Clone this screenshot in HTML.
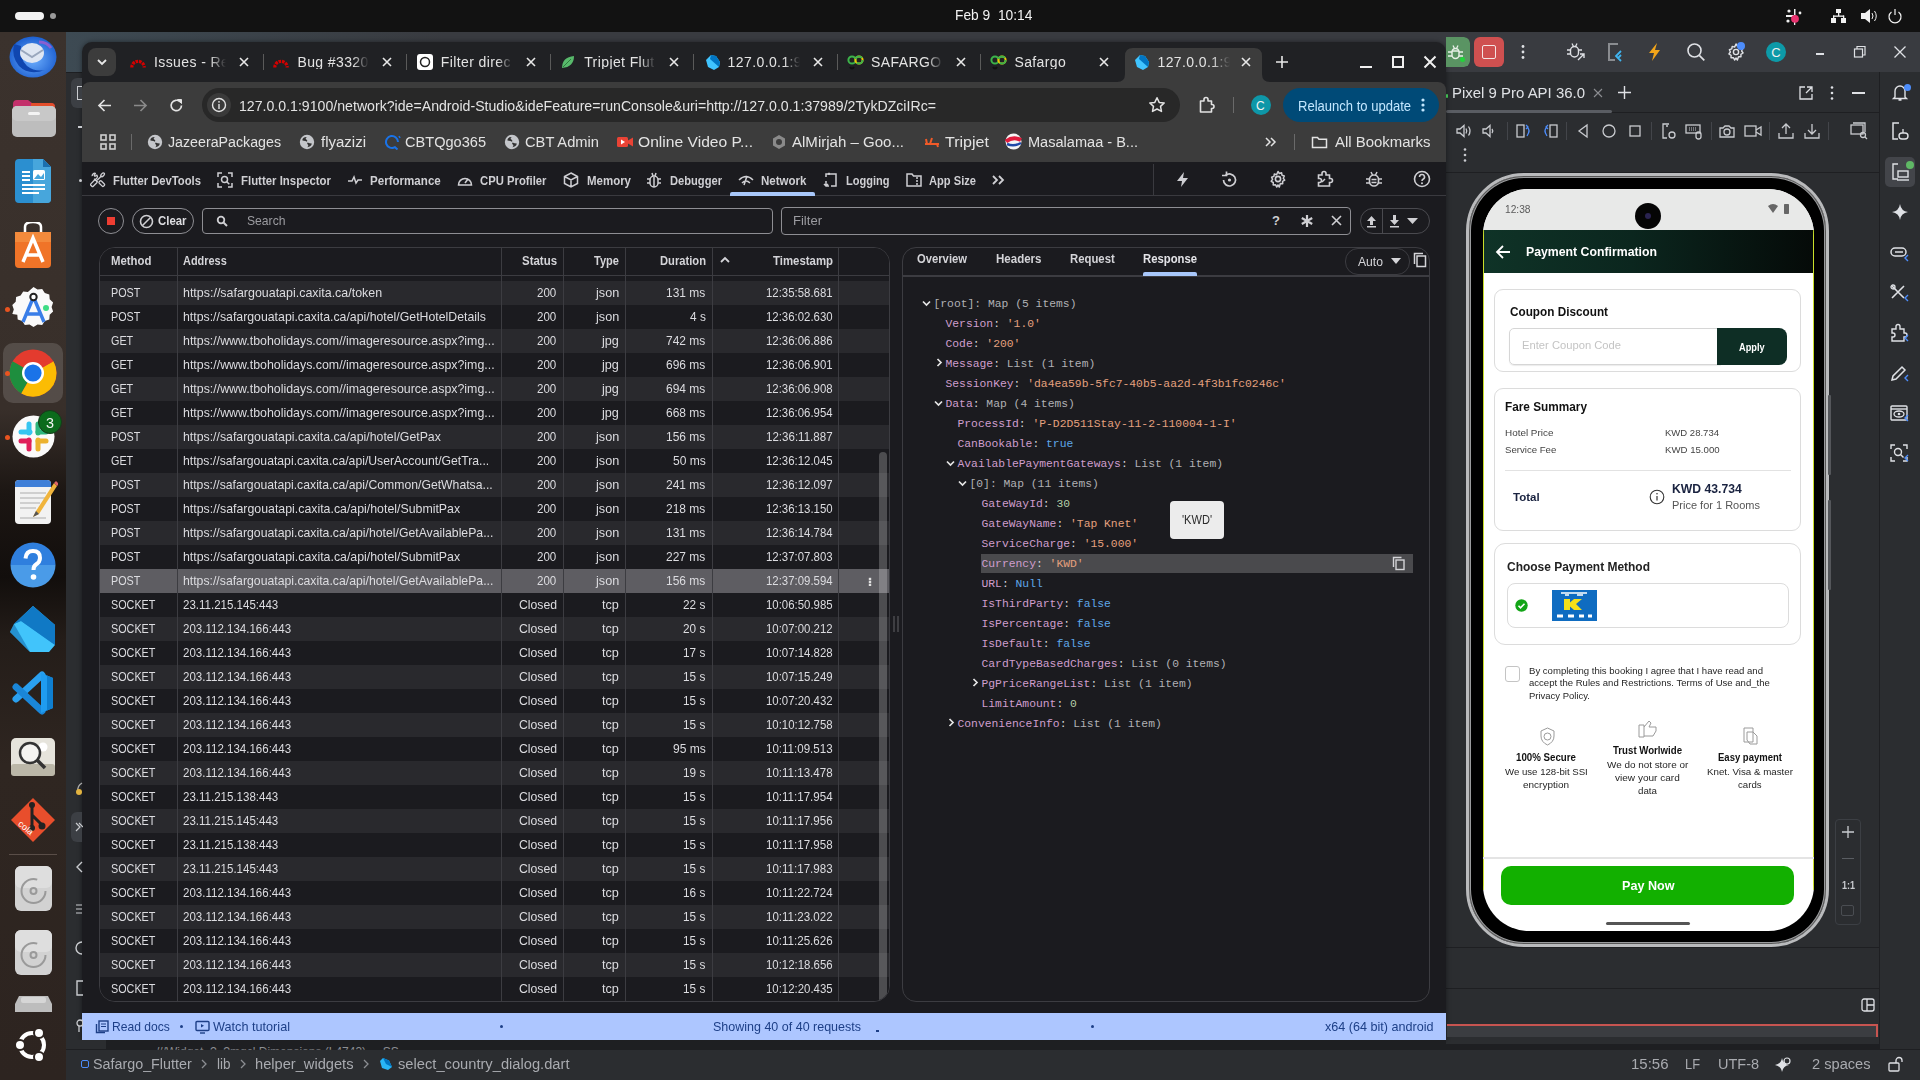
<!DOCTYPE html><html><head><meta charset="utf-8"><style>
*{margin:0;padding:0;box-sizing:border-box}
html,body{width:1920px;height:1080px;overflow:hidden;background:#2b2d30;font-family:"Liberation Sans",sans-serif}
div,svg{position:absolute}
.t{position:absolute;white-space:nowrap}
</style></head><body><div style="left:0px;top:0px;width:1920px;height:32px;background:#121212"></div><div style="left:15px;top:12px;width:29px;height:8px;background:#f2f2f2;border-radius:4px"></div><div style="left:50px;top:13px;width:6px;height:6px;background:#9a9a9a;border-radius:3px"></div><div class="t" style="left:954.6px;top:7.30px;font-size:15px;line-height:15px;color:#f2f2f2;font-weight:normal;font-family:'Liberation Sans',sans-serif;transform:scaleX(0.9189);transform-origin:0 0;white-space:pre">Feb 9  10:14</div><svg style="position:absolute;left:1785px;top:8px;" width="20" height="18" viewBox="0 0 20 18"><g fill="#eee"><rect x="1" y="7" width="8" height="2"/><circle cx="4" cy="3" r="1.6"/><rect x="9" y="1" width="1.5" height="6"/><circle cx="15" cy="5" r="1.4"/><circle cx="3" cy="13" r="1.6"/><rect x="9" y="11" width="1.3" height="6"/></g><circle cx="10" cy="10.8" r="3.9" fill="#e8336f"/></svg><svg style="position:absolute;left:1830px;top:8px;" width="18" height="16" viewBox="0 0 18 16"><g fill="#f2f2f2"><rect x="6" y="1" width="5" height="4"/><rect x="1" y="10" width="5" height="5"/><rect x="11" y="10" width="5" height="5"/><rect x="8" y="5" width="1.3" height="3"/><rect x="3" y="7.5" width="11" height="1.3"/><rect x="3" y="7.5" width="1.3" height="3"/><rect x="13" y="7.5" width="1.3" height="3"/></g></svg><svg style="position:absolute;left:1860px;top:7px;" width="18" height="18" viewBox="0 0 18 18"><path d="M1 6h4l5-4v14l-5-4H1z" fill="#f0f0f0"/><path d="M12 6q2 3 0 6M14.5 4q3.5 5 0 10" stroke="#f0f0f0" stroke-width="1" fill="none"/></svg><svg style="position:absolute;left:1886px;top:7px;" width="18" height="18" viewBox="0 0 18 18"><path d="M5.5 5A6 6 0 1 0 12.5 5" stroke="#f0f0f0" stroke-width="1.2" fill="none"/><rect x="8.4" y="2" width="1.2" height="6" fill="#f0f0f0"/></svg><div style="left:0px;top:32px;width:66px;height:1048px;background:linear-gradient(180deg,#3b322d 0%,#382f2a 36%,#1c1613 44%,#120e0c 52%,#241d19 58%,#2f2621 70%,#2d2420 100%)"></div><div style="left:66px;top:32px;width:1854px;height:1048px;background:#2b2d30"></div><div style="left:66px;top:32px;width:1854px;height:40px;background:#393b40"></div><div style="left:66px;top:32px;width:380px;height:40px;background:linear-gradient(90deg,#3d4a53,#393b40)"></div><div style="left:66px;top:72px;width:1380px;height:1px;background:#1e1f22"></div><div style="left:1446px;top:112px;width:434px;height:1px;background:#1e1f22"></div><div style="left:1446px;top:110px;width:166px;height:3px;background:#5a5d63;border-radius:2px"></div><div style="left:1879px;top:72px;width:1px;height:976px;background:#1e1f22"></div><div style="left:1446px;top:172px;width:434px;height:1px;background:#1e1f22"></div><div style="left:1446px;top:947px;width:434px;height:1px;background:#1e1f22"></div><div style="left:1446px;top:988px;width:434px;height:1px;background:#1e1f22"></div><div style="left:66px;top:1049px;width:1854px;height:1px;background:#1e1f22"></div><div style="left:82px;top:42px;width:1364px;height:998px;background:#202124;border-radius:10px 10px 0 0;overflow:hidden;box-shadow:0 0 5px rgba(0,0,0,.45)"></div><div style="left:82px;top:82px;width:1364px;height:80px;background:#3c3c3c;border-radius:8px 8px 0 0"></div><div style="left:82px;top:162px;width:1364px;height:851px;background:#1b1b1f"></div><div style="left:82px;top:1013px;width:1364px;height:27px;background:#adc6ff"></div><div style="left:88px;top:48px;width:28px;height:28px;background:#3c3c3c;border-radius:8px"></div><svg style="position:absolute;left:95px;top:55px;" width="14" height="14" viewBox="0 0 14 14"><path d="M3 5l4 4 4-4" stroke="#e8e8e8" stroke-width="1.8" fill="none"/></svg><svg style="position:absolute;left:130px;top:54px;" width="16" height="16" viewBox="0 0 16 16"><path d="M1.8 13.5A6.2 6.2 0 0 1 14.2 13.5" stroke="#d40000" stroke-width="3.2" fill="none" stroke-dasharray="2.6 0.9"/></svg><div class="t" style="left:154.0px;top:55.15px;font-size:14px;line-height:14px;color:#e3e3e3;font-weight:normal;font-family:'Liberation Sans',sans-serif;width:72px;overflow:hidden;letter-spacing:0.4px;-webkit-mask-image:linear-gradient(90deg,#000 78%,transparent 100%)">Issues - Red</div><svg style="position:absolute;left:238px;top:56px;" width="12" height="12" viewBox="0 0 12 12"><path d="M2 2l8 8M10 2l-8 8" stroke="#e8e8e8" stroke-width="1.6"/></svg><div style="left:263px;top:54px;width:1px;height:16px;background:#5a5a5a"></div><svg style="position:absolute;left:273px;top:54px;" width="16" height="16" viewBox="0 0 16 16"><path d="M1.8 13.5A6.2 6.2 0 0 1 14.2 13.5" stroke="#d40000" stroke-width="3.2" fill="none" stroke-dasharray="2.6 0.9"/></svg><div class="t" style="left:297.4px;top:55.15px;font-size:14px;line-height:14px;color:#e3e3e3;font-weight:normal;font-family:'Liberation Sans',sans-serif;width:72px;overflow:hidden;letter-spacing:0.4px;-webkit-mask-image:linear-gradient(90deg,#000 78%,transparent 100%)">Bug #3320</div><svg style="position:absolute;left:381px;top:56px;" width="12" height="12" viewBox="0 0 12 12"><path d="M2 2l8 8M10 2l-8 8" stroke="#e8e8e8" stroke-width="1.6"/></svg><div style="left:406px;top:54px;width:1px;height:16px;background:#5a5a5a"></div><svg style="position:absolute;left:417px;top:54px;" width="16" height="16" viewBox="0 0 16 16"><rect x="0" y="0" width="16" height="16" rx="3" fill="#fff"/><circle cx="8" cy="8" r="4.5" stroke="#222" stroke-width="1.5" fill="none"/></svg><div class="t" style="left:440.8px;top:55.15px;font-size:14px;line-height:14px;color:#e3e3e3;font-weight:normal;font-family:'Liberation Sans',sans-serif;width:72px;overflow:hidden;letter-spacing:0.4px;-webkit-mask-image:linear-gradient(90deg,#000 78%,transparent 100%)">Filter direc</div><svg style="position:absolute;left:525px;top:56px;" width="12" height="12" viewBox="0 0 12 12"><path d="M2 2l8 8M10 2l-8 8" stroke="#e8e8e8" stroke-width="1.6"/></svg><div style="left:550px;top:54px;width:1px;height:16px;background:#5a5a5a"></div><svg style="position:absolute;left:560px;top:54px;" width="16" height="16" viewBox="0 0 16 16"><path d="M2 14Q2 3 14 2Q14 13 2 14z" fill="#58b96b"/><path d="M3 13L11 5" stroke="#2e7a3c" stroke-width="1"/></svg><div class="t" style="left:584.2px;top:55.15px;font-size:14px;line-height:14px;color:#e3e3e3;font-weight:normal;font-family:'Liberation Sans',sans-serif;width:72px;overflow:hidden;letter-spacing:0.4px;-webkit-mask-image:linear-gradient(90deg,#000 78%,transparent 100%)">Tripjet Flut</div><svg style="position:absolute;left:668px;top:56px;" width="12" height="12" viewBox="0 0 12 12"><path d="M2 2l8 8M10 2l-8 8" stroke="#e8e8e8" stroke-width="1.6"/></svg><div style="left:693px;top:54px;width:1px;height:16px;background:#5a5a5a"></div><svg style="position:absolute;left:704px;top:54px;" width="16" height="16" viewBox="0 0 16 16"><path d="M2 6L7 1L12 2L16 8L15 13L10 16L4 13z" fill="#40c4ff"/><path d="M7 1L12 2L16 8L15 13L6 5z" fill="#0175c2"/></svg><div class="t" style="left:727.6px;top:55.15px;font-size:14px;line-height:14px;color:#e3e3e3;font-weight:normal;font-family:'Liberation Sans',sans-serif;width:72px;overflow:hidden;letter-spacing:0.4px;-webkit-mask-image:linear-gradient(90deg,#000 78%,transparent 100%)">127.0.0.1:9</div><svg style="position:absolute;left:812px;top:56px;" width="12" height="12" viewBox="0 0 12 12"><path d="M2 2l8 8M10 2l-8 8" stroke="#e8e8e8" stroke-width="1.6"/></svg><div style="left:837px;top:54px;width:1px;height:16px;background:#5a5a5a"></div><svg style="position:absolute;left:847px;top:54px;" width="18" height="18" viewBox="0 0 18 18"><circle cx="5" cy="6" r="3.6" stroke="#3cb44a" stroke-width="2" fill="none"/><circle cx="12" cy="6" r="3.6" stroke="#f2c500" stroke-width="2" fill="none"/><circle cx="12" cy="6" r="3.6" stroke="#3cb44a" stroke-width="2" fill="none" stroke-dasharray="8 4"/><path d="M3 13q2 3 4 0" stroke="#111" stroke-width="2" fill="none"/></svg><div class="t" style="left:871.0px;top:55.15px;font-size:14px;line-height:14px;color:#e3e3e3;font-weight:normal;font-family:'Liberation Sans',sans-serif;width:72px;overflow:hidden;letter-spacing:0.4px;-webkit-mask-image:linear-gradient(90deg,#000 78%,transparent 100%)">SAFARGO</div><svg style="position:absolute;left:955px;top:56px;" width="12" height="12" viewBox="0 0 12 12"><path d="M2 2l8 8M10 2l-8 8" stroke="#e8e8e8" stroke-width="1.6"/></svg><div style="left:980px;top:54px;width:1px;height:16px;background:#5a5a5a"></div><svg style="position:absolute;left:990px;top:54px;" width="18" height="18" viewBox="0 0 18 18"><circle cx="5" cy="6" r="3.6" stroke="#3cb44a" stroke-width="2" fill="none"/><circle cx="12" cy="6" r="3.6" stroke="#f2c500" stroke-width="2" fill="none"/><circle cx="12" cy="6" r="3.6" stroke="#3cb44a" stroke-width="2" fill="none" stroke-dasharray="8 4"/><path d="M3 13q2 3 4 0" stroke="#111" stroke-width="2" fill="none"/></svg><div class="t" style="left:1014.4000000000001px;top:55.15px;font-size:14px;line-height:14px;color:#e3e3e3;font-weight:normal;font-family:'Liberation Sans',sans-serif;width:72px;overflow:hidden;letter-spacing:0.4px;-webkit-mask-image:linear-gradient(90deg,#000 78%,transparent 100%)">Safargo</div><svg style="position:absolute;left:1098px;top:56px;" width="12" height="12" viewBox="0 0 12 12"><path d="M2 2l8 8M10 2l-8 8" stroke="#e8e8e8" stroke-width="1.6"/></svg><svg style="position:absolute;left:1117px;top:48px" width="153" height="34" viewBox="0 0 153 34"><path d="M0 34Q8 34 8 26L8 8Q8 0 16 0L137 0Q145 0 145 8L145 26Q145 34 153 34z" fill="#3c3c3c"/></svg><svg style="position:absolute;left:1133px;top:54px;" width="16" height="16" viewBox="0 0 16 16"><path d="M2 6L7 1L12 2L16 8L15 13L10 16L4 13z" fill="#40c4ff"/><path d="M7 1L12 2L16 8L15 13L6 5z" fill="#0175c2"/></svg><div class="t" style="left:1157.5px;top:55.15px;font-size:14px;line-height:14px;color:#e3e3e3;font-weight:normal;font-family:'Liberation Sans',sans-serif;width:72px;overflow:hidden;letter-spacing:0.4px;-webkit-mask-image:linear-gradient(90deg,#000 75%,transparent 100%)">127.0.0.1:9100</div><svg style="position:absolute;left:1240px;top:56px;" width="12" height="12" viewBox="0 0 12 12"><path d="M2 2l8 8M10 2l-8 8" stroke="#e8e8e8" stroke-width="1.6"/></svg><svg style="position:absolute;left:1275px;top:55px;" width="14" height="14" viewBox="0 0 14 14"><path d="M7 1v12M1 7h12" stroke="#e8e8e8" stroke-width="1.6"/></svg><div style="left:1360px;top:66px;width:12px;height:2px;background:#f0f0f0"></div><div style="left:1392px;top:56px;width:12px;height:12px;border:2px solid #f0f0f0"></div><svg style="position:absolute;left:1423px;top:55px;" width="14" height="14" viewBox="0 0 14 14"><path d="M1.5 1.5l11 11M12.5 1.5l-11 11" stroke="#f0f0f0" stroke-width="2"/></svg><svg style="position:absolute;left:96px;top:97px;" width="17" height="17" viewBox="0 0 17 17"><path d="M15 8.5H3M8.5 3L3 8.5 8.5 14" stroke="#e3e3e3" stroke-width="1.7" fill="none"/></svg><svg style="position:absolute;left:132px;top:97px;" width="17" height="17" viewBox="0 0 17 17"><path d="M2 8.5h12M8.5 3L14 8.5 8.5 14" stroke="#8a8a8a" stroke-width="1.7" fill="none"/></svg><svg style="position:absolute;left:168px;top:97px;" width="17" height="17" viewBox="0 0 17 17"><path d="M13.5 8.5A5.2 5.2 0 1 1 12 4.8" stroke="#e3e3e3" stroke-width="1.7" fill="none"/><path d="M9.5 2.5h4v4z" fill="#e3e3e3" stroke="#e3e3e3" stroke-width="1"/></svg><div style="left:202px;top:88px;width:978px;height:34px;background:#282828;border-radius:17px"></div><div style="left:207px;top:93px;width:24px;height:24px;background:#3a3a3a;border-radius:12px"></div><svg style="position:absolute;left:211px;top:97px;" width="16" height="16" viewBox="0 0 16 16"><circle cx="8" cy="8" r="6.5" stroke="#e3e3e3" stroke-width="1.4" fill="none"/><rect x="7.3" y="7" width="1.4" height="5" fill="#e3e3e3"/><circle cx="8" cy="4.8" r="0.9" fill="#e3e3e3"/></svg><div class="t" style="left:239px;top:97.80px;font-size:15px;line-height:15px;color:#e3e3e3;font-weight:normal;font-family:'Liberation Sans',sans-serif;transform:scaleX(0.9423);transform-origin:0 0;">127.0.0.1:9100/network?ide=Android-Studio&amp;ideFeature=runConsole&amp;uri=http://127.0.0.1:37989/2TykDZciIRc=</div><svg style="position:absolute;left:1148px;top:96px;" width="18" height="18" viewBox="0 0 18 18"><path d="M9 1.8l2.2 4.6 5 .6-3.7 3.4 1 5L9 13l-4.5 2.4 1-5L1.8 7l5-.6z" stroke="#e3e3e3" stroke-width="1.5" fill="none" stroke-linejoin="round"/></svg><svg style="position:absolute;left:1198px;top:96px;" width="18" height="18" viewBox="0 0 18 18"><path d="M2.5 5H6V3.5a2 2 0 0 1 4 0V5h3.5v3.5h.5a2 2 0 0 1 0 4h-.5V16h-11z" stroke="#e3e3e3" stroke-width="1.6" fill="none" stroke-linejoin="round"/></svg><div style="left:1233px;top:97px;width:1px;height:16px;background:#6a6a6a"></div><div style="left:1251px;top:95px;width:20px;height:20px;background:#0e97a8;border-radius:10px"></div><div class="t" style="left:1256px;top:99.84px;font-size:12px;line-height:12px;color:#f2f2f2;font-weight:normal;font-family:'Liberation Sans',sans-serif;">C</div><div style="left:1283px;top:88px;width:156px;height:34px;background:#004a77;border-radius:17px"></div><div class="t" style="left:1298px;top:98.65px;font-size:14px;line-height:14px;color:#c2e7ff;font-weight:normal;font-family:'Liberation Sans',sans-serif;transform:scaleX(0.9306);transform-origin:0 0;">Relaunch to update</div><svg style="position:absolute;left:1419px;top:97px;" width="8" height="16" viewBox="0 0 8 16"><circle cx="4" cy="3" r="1.6" fill="#c2e7ff"/><circle cx="4" cy="8" r="1.6" fill="#c2e7ff"/><circle cx="4" cy="13" r="1.6" fill="#c2e7ff"/></svg><svg style="position:absolute;left:100px;top:134px;" width="16" height="16" viewBox="0 0 16 16"><g stroke="#d0d0d0" stroke-width="1.6" fill="none"><rect x="1" y="1" width="5" height="5"/><rect x="10" y="1" width="5" height="5"/><rect x="1" y="10" width="5" height="5"/><rect x="10" y="10" width="5" height="5"/></g></svg><div style="left:131px;top:134px;width:1px;height:16px;background:#6a6a6a"></div><svg style="position:absolute;left:147px;top:134px;" width="16" height="16" viewBox="0 0 16 16"><circle cx="8" cy="8" r="7.2" fill="#c4c6ca"/><path d="M3.2 6.2Q4 2.8 7.8 3Q6 4.3 7 5.2Q9 6 8 7.8Q6.4 7 4.6 6.8z M12.8 9.6Q12.4 13 8.2 13.2Q10 12 9 10.8Q7.4 9.8 8.6 8.6Q10.6 9.6 12.8 9.6z" fill="#333"/></svg><div class="t" style="left:168px;top:135.15px;font-size:14px;line-height:14px;color:#e3e3e3;font-weight:normal;font-family:'Liberation Sans',sans-serif;transform:scaleX(1.0153);transform-origin:0 0;">JazeeraPackages</div><svg style="position:absolute;left:299px;top:134px;" width="16" height="16" viewBox="0 0 16 16"><circle cx="8" cy="8" r="7.2" fill="#c4c6ca"/><path d="M3.2 6.2Q4 2.8 7.8 3Q6 4.3 7 5.2Q9 6 8 7.8Q6.4 7 4.6 6.8z M12.8 9.6Q12.4 13 8.2 13.2Q10 12 9 10.8Q7.4 9.8 8.6 8.6Q10.6 9.6 12.8 9.6z" fill="#333"/></svg><div class="t" style="left:321px;top:135.15px;font-size:14px;line-height:14px;color:#e3e3e3;font-weight:normal;font-family:'Liberation Sans',sans-serif;transform:scaleX(1.0712);transform-origin:0 0;">flyazizi</div><svg style="position:absolute;left:384px;top:134px;" width="18" height="16" viewBox="0 0 18 16"><path d="M14 8A6 6 0 1 0 11 13.2L13.5 15.5" stroke="#1a73e8" stroke-width="2" fill="none"/><path d="M15 2l1 2" stroke="#1a73e8" stroke-width="1.5"/></svg><div class="t" style="left:405px;top:135.15px;font-size:14px;line-height:14px;color:#e3e3e3;font-weight:normal;font-family:'Liberation Sans',sans-serif;transform:scaleX(1.0408);transform-origin:0 0;">CBTQgo365</div><svg style="position:absolute;left:504px;top:134px;" width="16" height="16" viewBox="0 0 16 16"><circle cx="8" cy="8" r="7.2" fill="#c4c6ca"/><path d="M3.2 6.2Q4 2.8 7.8 3Q6 4.3 7 5.2Q9 6 8 7.8Q6.4 7 4.6 6.8z M12.8 9.6Q12.4 13 8.2 13.2Q10 12 9 10.8Q7.4 9.8 8.6 8.6Q10.6 9.6 12.8 9.6z" fill="#333"/></svg><div class="t" style="left:525px;top:135.15px;font-size:14px;line-height:14px;color:#e3e3e3;font-weight:normal;font-family:'Liberation Sans',sans-serif;transform:scaleX(1.0489);transform-origin:0 0;">CBT Admin</div><svg style="position:absolute;left:616px;top:134px;" width="18" height="16" viewBox="0 0 18 16"><rect x="1" y="3" width="11" height="10" rx="1.5" fill="#ea4335"/><path d="M12 6.5L17 3.5V12.5L12 9.5z" fill="#ea4335"/><path d="M5 5.5v5l4-2.5z" fill="#fff"/></svg><div class="t" style="left:638px;top:135.15px;font-size:14px;line-height:14px;color:#e3e3e3;font-weight:normal;font-family:'Liberation Sans',sans-serif;transform:scaleX(1.1164);transform-origin:0 0;">Online Video P...</div><svg style="position:absolute;left:771px;top:134px;" width="16" height="16" viewBox="0 0 16 16"><path d="M8 1l6 3.5v7L8 15l-6-3.5v-7z" fill="#8a8a8a"/><circle cx="8" cy="8" r="3" fill="#3c3c3c"/></svg><div class="t" style="left:792px;top:135.15px;font-size:14px;line-height:14px;color:#e3e3e3;font-weight:normal;font-family:'Liberation Sans',sans-serif;transform:scaleX(1.0742);transform-origin:0 0;">AlMirjah – Goo...</div><svg style="position:absolute;left:924px;top:134px;" width="16" height="16" viewBox="0 0 16 16"><path d="M1 10h14M3 10l-1-5M13 10l1 3M6 10L8 4" stroke="#f05a28" stroke-width="2" fill="none"/></svg><div class="t" style="left:945px;top:135.15px;font-size:14px;line-height:14px;color:#e3e3e3;font-weight:normal;font-family:'Liberation Sans',sans-serif;transform:scaleX(1.1465);transform-origin:0 0;">Tripjet</div><svg style="position:absolute;left:1005px;top:133px;" width="17" height="17" viewBox="0 0 17 17"><circle cx="8.5" cy="8.5" r="8" fill="#f5f5f5"/><path d="M1 8.5Q8 3 16 7" stroke="#e01b3c" stroke-width="4" fill="none"/><path d="M2 11Q9 14 16 10" stroke="#1f4aa8" stroke-width="2.5" fill="none"/></svg><div class="t" style="left:1028px;top:135.15px;font-size:14px;line-height:14px;color:#e3e3e3;font-weight:normal;font-family:'Liberation Sans',sans-serif;transform:scaleX(1.0395);transform-origin:0 0;">Masalamaa - B...</div><svg style="position:absolute;left:1264px;top:135px;" width="14" height="14" viewBox="0 0 14 14"><path d="M2 3l4 4-4 4M7 3l4 4-4 4" stroke="#e3e3e3" stroke-width="1.5" fill="none"/></svg><div style="left:1294px;top:134px;width:1px;height:16px;background:#6a6a6a"></div><svg style="position:absolute;left:1311px;top:135px;" width="17" height="14" viewBox="0 0 17 14"><path d="M1.5 2.5h5l1.5 1.8h7.5v8.2h-14z" stroke="#e3e3e3" stroke-width="1.5" fill="none"/></svg><div class="t" style="left:1335px;top:135.15px;font-size:14px;line-height:14px;color:#e3e3e3;font-weight:normal;font-family:'Liberation Sans',sans-serif;transform:scaleX(1.0674);transform-origin:0 0;">All Bookmarks</div><div style="left:82px;top:195px;width:1364px;height:1px;background:#3a3a3f"></div><svg style="position:absolute;left:89.5px;top:172px;" width="16" height="16" viewBox="0 0 16 16"><g stroke="#cfcfd3" stroke-width="1.3" fill="none" stroke-linejoin="round"><rect x="-1.7" y="0" width="3.4" height="7" rx="1" transform="translate(6.3,8.8) rotate(45)"/><rect x="-1.5" y="0" width="3" height="6.2" rx="1" transform="translate(9.6,9.4) rotate(-45)"/><path d="M7.2 8.2L11.6 3.8"/><path d="M2.2 4.2A2.6 2.6 0 0 1 5.4 1.3L4.2 3.3 5 4.3 6.9 3.1A2.6 2.6 0 0 1 4.4 7.2L7.6 9.8"/><ellipse cx="12.6" cy="2.8" rx="2.2" ry="1.3" transform="rotate(-45 12.6 2.8)"/></g></svg><div class="t" style="left:113.25px;top:173.57px;font-size:13.5px;line-height:13.5px;color:#cfcfd3;font-weight:bold;font-family:'Liberation Sans',sans-serif;transform:scaleX(0.8340);transform-origin:0 0;">Flutter DevTools</div><svg style="position:absolute;left:217px;top:172px;" width="16" height="16" viewBox="0 0 16 16"><path d="M1 5V1h4M11 1h4v4M15 11v4h-4M5 15H1v-4" stroke="#cfcfd3" stroke-width="1.5" fill="none"/><circle cx="7.5" cy="7.5" r="3" stroke="#cfcfd3" stroke-width="1.5" fill="none"/><path d="M9.8 9.8l2.5 2.5" stroke="#cfcfd3" stroke-width="1.5" fill="none"/></svg><div class="t" style="left:240.75px;top:173.57px;font-size:13.5px;line-height:13.5px;color:#cfcfd3;font-weight:bold;font-family:'Liberation Sans',sans-serif;transform:scaleX(0.8450);transform-origin:0 0;">Flutter Inspector</div><svg style="position:absolute;left:347px;top:172px;" width="16" height="16" viewBox="0 0 16 16"><path d="M1 9h4l2-4 2 6 2-3h4" stroke="#cfcfd3" stroke-width="1.5" fill="none"/></svg><div class="t" style="left:370px;top:173.57px;font-size:13.5px;line-height:13.5px;color:#cfcfd3;font-weight:bold;font-family:'Liberation Sans',sans-serif;transform:scaleX(0.8572);transform-origin:0 0;">Performance</div><svg style="position:absolute;left:457px;top:172px;" width="16" height="16" viewBox="0 0 16 16"><path d="M1.5 13A6.5 6.5 0 1 1 14.5 13z" stroke="#cfcfd3" stroke-width="1.5" fill="none"/><path d="M8 11l3-4" stroke="#cfcfd3" stroke-width="1.5" fill="none"/></svg><div class="t" style="left:480px;top:173.57px;font-size:13.5px;line-height:13.5px;color:#cfcfd3;font-weight:bold;font-family:'Liberation Sans',sans-serif;transform:scaleX(0.8363);transform-origin:0 0;">CPU Profiler</div><svg style="position:absolute;left:563px;top:172px;" width="16" height="16" viewBox="0 0 16 16"><path d="M8 1l6.5 3.5v7L8 15 1.5 11.5v-7zM1.5 4.5L8 8l6.5-3.5M8 8v7" stroke="#cfcfd3" stroke-width="1.5" fill="none"/></svg><div class="t" style="left:586.75px;top:173.57px;font-size:13.5px;line-height:13.5px;color:#cfcfd3;font-weight:bold;font-family:'Liberation Sans',sans-serif;transform:scaleX(0.8500);transform-origin:0 0;">Memory</div><svg style="position:absolute;left:646px;top:172px;" width="16" height="16" viewBox="0 0 16 16"><rect x="4" y="4" width="8" height="11" rx="4" stroke="#cfcfd3" stroke-width="1.5" fill="none"/><path d="M1 7h3M12 7h3M1 11h3M12 11h3M6 1l1 3M10 1l-1 3M8 5v10" stroke="#cfcfd3" stroke-width="1.5" fill="none"/></svg><div class="t" style="left:669.5px;top:173.57px;font-size:13.5px;line-height:13.5px;color:#cfcfd3;font-weight:bold;font-family:'Liberation Sans',sans-serif;transform:scaleX(0.8253);transform-origin:0 0;">Debugger</div><svg style="position:absolute;left:738px;top:172px;" width="16" height="16" viewBox="0 0 16 16"><path d="M1 8q7-7 14 0M4 11q4-4 8 0M9 4L6 13" stroke="#cfcfd3" stroke-width="1.5" fill="none"/></svg><div class="t" style="left:761.25px;top:173.57px;font-size:13.5px;line-height:13.5px;color:#cfcfd3;font-weight:bold;font-family:'Liberation Sans',sans-serif;transform:scaleX(0.8543);transform-origin:0 0;">Network</div><svg style="position:absolute;left:823px;top:172px;" width="16" height="16" viewBox="0 0 16 16"><path d="M3 5V2h10v12H8M3 9v5h3M1 12l2 2 2-2" stroke="#cfcfd3" stroke-width="1.5" fill="none"/><rect x="5" y="0.8" width="2" height="2" fill="#cfcfd3"/></svg><div class="t" style="left:845.75px;top:173.57px;font-size:13.5px;line-height:13.5px;color:#cfcfd3;font-weight:bold;font-family:'Liberation Sans',sans-serif;transform:scaleX(0.8172);transform-origin:0 0;">Logging</div><svg style="position:absolute;left:906px;top:172px;" width="16" height="16" viewBox="0 0 16 16"><path d="M1 2h5l1.5 2H15v10H1z" stroke="#cfcfd3" stroke-width="1.5" fill="none"/><path d="M10 6h2M10 9h2M10 12h2" stroke="#cfcfd3" stroke-width="1.5" fill="none"/></svg><div class="t" style="left:929.25px;top:173.57px;font-size:13.5px;line-height:13.5px;color:#cfcfd3;font-weight:bold;font-family:'Liberation Sans',sans-serif;transform:scaleX(0.8245);transform-origin:0 0;">App Size</div><svg style="position:absolute;left:991px;top:173px;" width="14" height="14" viewBox="0 0 14 14"><path d="M2 3l4 4-4 4M8 3l4 4-4 4" stroke="#cfcfd3" stroke-width="1.8" fill="none"/></svg><div style="left:730px;top:192px;width:85px;height:4px;background:#a8c7fa;border-radius:2px 2px 0 0"></div><div style="left:1153px;top:164px;width:1px;height:32px;background:#3a3a3f"></div><svg style="position:absolute;left:1174px;top:171px;" width="17" height="17" viewBox="0 0 17 17"><path d="M10 1L3 10h5l-1 6 7-9H9z" fill="#cfcfd3"/></svg><svg style="position:absolute;left:1220px;top:171px;" width="18" height="18" viewBox="0 0 18 18"><path d="M3.5 9A6 6 0 1 0 5.5 4.5" stroke="#cfcfd3" stroke-width="1.7" fill="none"/><path d="M2 4.5h4.5V0.5" stroke="#cfcfd3" stroke-width="1.7" fill="none"/><circle cx="9.5" cy="9" r="1.6" fill="#cfcfd3"/></svg><svg style="position:absolute;left:1269px;top:170px;" width="18" height="18" viewBox="0 0 18 18"><circle cx="9" cy="9" r="2.6" stroke="#cfcfd3" stroke-width="1.6" fill="none"/><path d="M9 1.5l1.3 2 2.3-.7.4 2.4 2.3.8-1 2.2 1.4 1.9-2.1 1.2.1 2.4-2.4-.1L10.3 17 9 15l-1.3 2-1.1-2.2-2.4.1.1-2.4-2.1-1.2 1.4-1.9-1-2.2 2.3-.8.4-2.4 2.3.7z" stroke="#cfcfd3" stroke-width="1.5" fill="none" stroke-linejoin="round"/></svg><svg style="position:absolute;left:1316px;top:170px;" width="18" height="18" viewBox="0 0 18 18"><path d="M2.5 5h3.5V3.5a2 2 0 0 1 4 0V5h3.5v3.5h1a2 2 0 0 1 0 4h-1V16h-11v-3.5h1a2 2 0 0 0 0-4h-1z" stroke="#cfcfd3" stroke-width="1.6" fill="none"/><path d="M6 12l3-3" stroke="#cfcfd3" stroke-width="1.5"/></svg><svg style="position:absolute;left:1365px;top:170px;" width="18" height="18" viewBox="0 0 18 18"><rect x="4.5" y="5" width="9" height="11" rx="4.5" stroke="#cfcfd3" stroke-width="1.6" fill="none"/><path d="M1 9h3.5M13.5 9H17M1 13h3.5M13.5 13H17M6 2l1.5 3M12 2l-1.5 3M6.5 9.5h5M6.5 12.5h5" stroke="#cfcfd3" stroke-width="1.5"/></svg><svg style="position:absolute;left:1413px;top:170px;" width="18" height="18" viewBox="0 0 18 18"><circle cx="9" cy="9" r="7.5" stroke="#cfcfd3" stroke-width="1.6" fill="none"/><path d="M6.5 7a2.5 2.5 0 1 1 3.5 2.3c-.8.4-1 .9-1 1.7" stroke="#cfcfd3" stroke-width="1.6" fill="none"/><circle cx="9" cy="13.3" r="1" fill="#cfcfd3"/></svg><div style="left:98px;top:208px;width:26px;height:26px;border:1px solid #8e8e93;border-radius:13px"></div><div style="left:107px;top:217px;width:8px;height:8px;background:#ee3d32"></div><div style="left:132px;top:208px;width:62px;height:26px;border:1px solid #8e8e93;border-radius:13px"></div><svg style="position:absolute;left:139px;top:214px;" width="15" height="15" viewBox="0 0 15 15"><circle cx="7.5" cy="7.5" r="6" stroke="#cfcfd3" stroke-width="1.6" fill="none"/><path d="M3.5 11.5l8-8" stroke="#cfcfd3" stroke-width="1.6"/></svg><div class="t" style="left:158px;top:214.07px;font-size:13.5px;line-height:13.5px;color:#dedee2;font-weight:bold;font-family:'Liberation Sans',sans-serif;transform:scaleX(0.8439);transform-origin:0 0;">Clear</div><div style="left:202px;top:208px;width:571px;height:26px;border:1px solid #8e8e93;border-radius:4px"></div><svg style="position:absolute;left:216px;top:215px;" width="12" height="12" viewBox="0 0 12 12"><circle cx="5" cy="5" r="3.3" stroke="#cfcfd3" stroke-width="1.8" fill="none"/><path d="M7.5 7.5l3.5 3.5" stroke="#cfcfd3" stroke-width="2"/></svg><div class="t" style="left:246.8px;top:214.49px;font-size:13px;line-height:13px;color:#9c9ca1;font-weight:normal;font-family:'Liberation Sans',sans-serif;transform:scaleX(0.9347);transform-origin:0 0;">Search</div><div style="left:781px;top:207px;width:570px;height:28px;border:1px solid #8e8e93;border-radius:4px"></div><div class="t" style="left:793px;top:213.99px;font-size:13px;line-height:13px;color:#9c9ca1;font-weight:normal;font-family:'Liberation Sans',sans-serif;transform:scaleX(1.0038);transform-origin:0 0;">Filter</div><div class="t" style="left:1272px;top:214.49px;font-size:13px;line-height:13px;color:#cfcfd3;font-weight:bold;font-family:'Liberation Sans',sans-serif;">?</div><svg style="position:absolute;left:1300px;top:214px;" width="14" height="14" viewBox="0 0 14 14"><path d="M7 1v12M1.8 4l10.4 6M1.8 10l10.4-6" stroke="#cfcfd3" stroke-width="2.2"/></svg><svg style="position:absolute;left:1330px;top:214px;" width="13" height="13" viewBox="0 0 13 13"><path d="M2 2l9 9M11 2l-9 9" stroke="#cfcfd3" stroke-width="1.6"/></svg><div style="left:1360px;top:208px;width:70px;height:26px;border:1px solid #4a4a4f;border-radius:13px"></div><div style="left:1382px;top:209px;width:1px;height:24px;background:#4a4a4f"></div><svg style="position:absolute;left:1365px;top:214px;" width="13" height="14" viewBox="0 0 13 14"><path d="M6.5 2L2 7h3v4h3V7h3z" fill="#cfcfd3"/><rect x="2" y="12" width="9" height="1.5" fill="#cfcfd3"/></svg><svg style="position:absolute;left:1388px;top:214px;" width="13" height="14" viewBox="0 0 13 14"><path d="M6.5 11L2 6h3V1h3v5h3z" fill="#cfcfd3"/><rect x="2" y="12" width="9" height="1.5" fill="#cfcfd3"/></svg><svg style="position:absolute;left:1406px;top:217px;" width="13" height="8" viewBox="0 0 13 8"><path d="M1 1h11L6.5 7z" fill="#cfcfd3"/></svg><div style="left:98.5px;top:246.5px;width:791px;height:755px;border:1px solid #3c3c41;border-radius:16px;overflow:hidden;background:#1b1b1f"><div style="left:0px;top:9.5px;width:790px;height:24px;background:#1b1b1f"></div><div class="t" style="left:11.8px;top:14.49px;font-size:13px;line-height:13px;color:#dcdce0;font-weight:normal;font-family:'Liberation Sans',sans-serif;transform:scaleX(0.8300);transform-origin:0 0;">POST</div><div class="t" style="left:83.5px;top:14.49px;font-size:13px;line-height:13px;color:#dcdce0;font-weight:normal;font-family:'Liberation Sans',sans-serif;transform:scaleX(0.9519);transform-origin:0 0;">https://safargouatapi.caxita.ca/auth/Login</div><div class="t" style="left:437.8px;top:14.49px;font-size:13px;line-height:13px;color:#dcdce0;font-weight:normal;font-family:'Liberation Sans',sans-serif;transform:scaleX(0.8900);transform-origin:0 0;">200</div><div class="t" style="left:496.45px;top:14.49px;font-size:13px;line-height:13px;color:#dcdce0;font-weight:normal;font-family:'Liberation Sans',sans-serif;transform:scaleX(0.9750);transform-origin:0 0;">json</div><div class="t" style="left:566.93px;top:14.49px;font-size:13px;line-height:13px;color:#dcdce0;font-weight:normal;font-family:'Liberation Sans',sans-serif;transform:scaleX(0.9212);transform-origin:0 0;">152 ms</div><div class="t" style="left:666.62px;top:14.49px;font-size:13px;line-height:13px;color:#dcdce0;font-weight:normal;font-family:'Liberation Sans',sans-serif;transform:scaleX(0.8772);transform-origin:0 0;">12:35:58.512</div><div style="left:0px;top:33.5px;width:790px;height:24px;background:#29292d"></div><div class="t" style="left:11.8px;top:38.49px;font-size:13px;line-height:13px;color:#dcdce0;font-weight:normal;font-family:'Liberation Sans',sans-serif;transform:scaleX(0.8300);transform-origin:0 0;">POST</div><div class="t" style="left:83.5px;top:38.49px;font-size:13px;line-height:13px;color:#dcdce0;font-weight:normal;font-family:'Liberation Sans',sans-serif;transform:scaleX(0.9568);transform-origin:0 0;">https://safargouatapi.caxita.ca/token</div><div class="t" style="left:437.8px;top:38.49px;font-size:13px;line-height:13px;color:#dcdce0;font-weight:normal;font-family:'Liberation Sans',sans-serif;transform:scaleX(0.8900);transform-origin:0 0;">200</div><div class="t" style="left:496.45px;top:38.49px;font-size:13px;line-height:13px;color:#dcdce0;font-weight:normal;font-family:'Liberation Sans',sans-serif;transform:scaleX(0.9750);transform-origin:0 0;">json</div><div class="t" style="left:566.93px;top:38.49px;font-size:13px;line-height:13px;color:#dcdce0;font-weight:normal;font-family:'Liberation Sans',sans-serif;transform:scaleX(0.9212);transform-origin:0 0;">131 ms</div><div class="t" style="left:666.62px;top:38.49px;font-size:13px;line-height:13px;color:#dcdce0;font-weight:normal;font-family:'Liberation Sans',sans-serif;transform:scaleX(0.8772);transform-origin:0 0;">12:35:58.681</div><div style="left:0px;top:57.5px;width:790px;height:24px;background:#1b1b1f"></div><div class="t" style="left:11.8px;top:62.49px;font-size:13px;line-height:13px;color:#dcdce0;font-weight:normal;font-family:'Liberation Sans',sans-serif;transform:scaleX(0.8300);transform-origin:0 0;">POST</div><div class="t" style="left:83.5px;top:62.49px;font-size:13px;line-height:13px;color:#dcdce0;font-weight:normal;font-family:'Liberation Sans',sans-serif;transform:scaleX(0.9461);transform-origin:0 0;">https://safargouatapi.caxita.ca/api/hotel/GetHotelDetails</div><div class="t" style="left:437.8px;top:62.49px;font-size:13px;line-height:13px;color:#dcdce0;font-weight:normal;font-family:'Liberation Sans',sans-serif;transform:scaleX(0.8900);transform-origin:0 0;">200</div><div class="t" style="left:496.45px;top:62.49px;font-size:13px;line-height:13px;color:#dcdce0;font-weight:normal;font-family:'Liberation Sans',sans-serif;transform:scaleX(0.9750);transform-origin:0 0;">json</div><div class="t" style="left:590.36px;top:62.49px;font-size:13px;line-height:13px;color:#dcdce0;font-weight:normal;font-family:'Liberation Sans',sans-serif;transform:scaleX(0.9135);transform-origin:0 0;">4 s</div><div class="t" style="left:666.62px;top:62.49px;font-size:13px;line-height:13px;color:#dcdce0;font-weight:normal;font-family:'Liberation Sans',sans-serif;transform:scaleX(0.8772);transform-origin:0 0;">12:36:02.630</div><div style="left:0px;top:81.5px;width:790px;height:24px;background:#29292d"></div><div class="t" style="left:11.8px;top:86.49px;font-size:13px;line-height:13px;color:#dcdce0;font-weight:normal;font-family:'Liberation Sans',sans-serif;transform:scaleX(0.8300);transform-origin:0 0;">GET</div><div class="t" style="left:83.5px;top:86.49px;font-size:13px;line-height:13px;color:#dcdce0;font-weight:normal;font-family:'Liberation Sans',sans-serif;transform:scaleX(0.9520);transform-origin:0 0;">https://www.tboholidays.com//imageresource.aspx?img...</div><div class="t" style="left:437.8px;top:86.49px;font-size:13px;line-height:13px;color:#dcdce0;font-weight:normal;font-family:'Liberation Sans',sans-serif;transform:scaleX(0.8900);transform-origin:0 0;">200</div><div class="t" style="left:502.78px;top:86.49px;font-size:13px;line-height:13px;color:#dcdce0;font-weight:normal;font-family:'Liberation Sans',sans-serif;transform:scaleX(0.9750);transform-origin:0 0;">jpg</div><div class="t" style="left:566.93px;top:86.49px;font-size:13px;line-height:13px;color:#dcdce0;font-weight:normal;font-family:'Liberation Sans',sans-serif;transform:scaleX(0.9212);transform-origin:0 0;">742 ms</div><div class="t" style="left:666.62px;top:86.49px;font-size:13px;line-height:13px;color:#dcdce0;font-weight:normal;font-family:'Liberation Sans',sans-serif;transform:scaleX(0.8772);transform-origin:0 0;">12:36:06.886</div><div style="left:0px;top:105.5px;width:790px;height:24px;background:#1b1b1f"></div><div class="t" style="left:11.8px;top:110.49px;font-size:13px;line-height:13px;color:#dcdce0;font-weight:normal;font-family:'Liberation Sans',sans-serif;transform:scaleX(0.8300);transform-origin:0 0;">GET</div><div class="t" style="left:83.5px;top:110.49px;font-size:13px;line-height:13px;color:#dcdce0;font-weight:normal;font-family:'Liberation Sans',sans-serif;transform:scaleX(0.9520);transform-origin:0 0;">https://www.tboholidays.com//imageresource.aspx?img...</div><div class="t" style="left:437.8px;top:110.49px;font-size:13px;line-height:13px;color:#dcdce0;font-weight:normal;font-family:'Liberation Sans',sans-serif;transform:scaleX(0.8900);transform-origin:0 0;">200</div><div class="t" style="left:502.78px;top:110.49px;font-size:13px;line-height:13px;color:#dcdce0;font-weight:normal;font-family:'Liberation Sans',sans-serif;transform:scaleX(0.9750);transform-origin:0 0;">jpg</div><div class="t" style="left:566.93px;top:110.49px;font-size:13px;line-height:13px;color:#dcdce0;font-weight:normal;font-family:'Liberation Sans',sans-serif;transform:scaleX(0.9212);transform-origin:0 0;">696 ms</div><div class="t" style="left:666.62px;top:110.49px;font-size:13px;line-height:13px;color:#dcdce0;font-weight:normal;font-family:'Liberation Sans',sans-serif;transform:scaleX(0.8772);transform-origin:0 0;">12:36:06.901</div><div style="left:0px;top:129.5px;width:790px;height:24px;background:#29292d"></div><div class="t" style="left:11.8px;top:134.49px;font-size:13px;line-height:13px;color:#dcdce0;font-weight:normal;font-family:'Liberation Sans',sans-serif;transform:scaleX(0.8300);transform-origin:0 0;">GET</div><div class="t" style="left:83.5px;top:134.49px;font-size:13px;line-height:13px;color:#dcdce0;font-weight:normal;font-family:'Liberation Sans',sans-serif;transform:scaleX(0.9520);transform-origin:0 0;">https://www.tboholidays.com//imageresource.aspx?img...</div><div class="t" style="left:437.8px;top:134.49px;font-size:13px;line-height:13px;color:#dcdce0;font-weight:normal;font-family:'Liberation Sans',sans-serif;transform:scaleX(0.8900);transform-origin:0 0;">200</div><div class="t" style="left:502.78px;top:134.49px;font-size:13px;line-height:13px;color:#dcdce0;font-weight:normal;font-family:'Liberation Sans',sans-serif;transform:scaleX(0.9750);transform-origin:0 0;">jpg</div><div class="t" style="left:566.93px;top:134.49px;font-size:13px;line-height:13px;color:#dcdce0;font-weight:normal;font-family:'Liberation Sans',sans-serif;transform:scaleX(0.9212);transform-origin:0 0;">694 ms</div><div class="t" style="left:666.62px;top:134.49px;font-size:13px;line-height:13px;color:#dcdce0;font-weight:normal;font-family:'Liberation Sans',sans-serif;transform:scaleX(0.8772);transform-origin:0 0;">12:36:06.908</div><div style="left:0px;top:153.5px;width:790px;height:24px;background:#1b1b1f"></div><div class="t" style="left:11.8px;top:158.49px;font-size:13px;line-height:13px;color:#dcdce0;font-weight:normal;font-family:'Liberation Sans',sans-serif;transform:scaleX(0.8300);transform-origin:0 0;">GET</div><div class="t" style="left:83.5px;top:158.49px;font-size:13px;line-height:13px;color:#dcdce0;font-weight:normal;font-family:'Liberation Sans',sans-serif;transform:scaleX(0.9520);transform-origin:0 0;">https://www.tboholidays.com//imageresource.aspx?img...</div><div class="t" style="left:437.8px;top:158.49px;font-size:13px;line-height:13px;color:#dcdce0;font-weight:normal;font-family:'Liberation Sans',sans-serif;transform:scaleX(0.8900);transform-origin:0 0;">200</div><div class="t" style="left:502.78px;top:158.49px;font-size:13px;line-height:13px;color:#dcdce0;font-weight:normal;font-family:'Liberation Sans',sans-serif;transform:scaleX(0.9750);transform-origin:0 0;">jpg</div><div class="t" style="left:566.93px;top:158.49px;font-size:13px;line-height:13px;color:#dcdce0;font-weight:normal;font-family:'Liberation Sans',sans-serif;transform:scaleX(0.9212);transform-origin:0 0;">668 ms</div><div class="t" style="left:666.62px;top:158.49px;font-size:13px;line-height:13px;color:#dcdce0;font-weight:normal;font-family:'Liberation Sans',sans-serif;transform:scaleX(0.8772);transform-origin:0 0;">12:36:06.954</div><div style="left:0px;top:177.5px;width:790px;height:24px;background:#29292d"></div><div class="t" style="left:11.8px;top:182.49px;font-size:13px;line-height:13px;color:#dcdce0;font-weight:normal;font-family:'Liberation Sans',sans-serif;transform:scaleX(0.8300);transform-origin:0 0;">POST</div><div class="t" style="left:83.5px;top:182.49px;font-size:13px;line-height:13px;color:#dcdce0;font-weight:normal;font-family:'Liberation Sans',sans-serif;transform:scaleX(0.9464);transform-origin:0 0;">https://safargouatapi.caxita.ca/api/hotel/GetPax</div><div class="t" style="left:437.8px;top:182.49px;font-size:13px;line-height:13px;color:#dcdce0;font-weight:normal;font-family:'Liberation Sans',sans-serif;transform:scaleX(0.8900);transform-origin:0 0;">200</div><div class="t" style="left:496.45px;top:182.49px;font-size:13px;line-height:13px;color:#dcdce0;font-weight:normal;font-family:'Liberation Sans',sans-serif;transform:scaleX(0.9750);transform-origin:0 0;">json</div><div class="t" style="left:566.93px;top:182.49px;font-size:13px;line-height:13px;color:#dcdce0;font-weight:normal;font-family:'Liberation Sans',sans-serif;transform:scaleX(0.9212);transform-origin:0 0;">156 ms</div><div class="t" style="left:666.62px;top:182.49px;font-size:13px;line-height:13px;color:#dcdce0;font-weight:normal;font-family:'Liberation Sans',sans-serif;transform:scaleX(0.8884);transform-origin:0 0;">12:36:11.887</div><div style="left:0px;top:201.5px;width:790px;height:24px;background:#1b1b1f"></div><div class="t" style="left:11.8px;top:206.49px;font-size:13px;line-height:13px;color:#dcdce0;font-weight:normal;font-family:'Liberation Sans',sans-serif;transform:scaleX(0.8300);transform-origin:0 0;">GET</div><div class="t" style="left:83.5px;top:206.49px;font-size:13px;line-height:13px;color:#dcdce0;font-weight:normal;font-family:'Liberation Sans',sans-serif;transform:scaleX(0.9391);transform-origin:0 0;">https://safargouatapi.caxita.ca/api/UserAccount/GetTra...</div><div class="t" style="left:437.8px;top:206.49px;font-size:13px;line-height:13px;color:#dcdce0;font-weight:normal;font-family:'Liberation Sans',sans-serif;transform:scaleX(0.8900);transform-origin:0 0;">200</div><div class="t" style="left:496.45px;top:206.49px;font-size:13px;line-height:13px;color:#dcdce0;font-weight:normal;font-family:'Liberation Sans',sans-serif;transform:scaleX(0.9750);transform-origin:0 0;">json</div><div class="t" style="left:573.36px;top:206.49px;font-size:13px;line-height:13px;color:#dcdce0;font-weight:normal;font-family:'Liberation Sans',sans-serif;transform:scaleX(0.9275);transform-origin:0 0;">50 ms</div><div class="t" style="left:666.62px;top:206.49px;font-size:13px;line-height:13px;color:#dcdce0;font-weight:normal;font-family:'Liberation Sans',sans-serif;transform:scaleX(0.8772);transform-origin:0 0;">12:36:12.045</div><div style="left:0px;top:225.5px;width:790px;height:24px;background:#29292d"></div><div class="t" style="left:11.8px;top:230.49px;font-size:13px;line-height:13px;color:#dcdce0;font-weight:normal;font-family:'Liberation Sans',sans-serif;transform:scaleX(0.8300);transform-origin:0 0;">POST</div><div class="t" style="left:83.5px;top:230.49px;font-size:13px;line-height:13px;color:#dcdce0;font-weight:normal;font-family:'Liberation Sans',sans-serif;transform:scaleX(0.9399);transform-origin:0 0;">https://safargouatapi.caxita.ca/api/Common/GetWhatsa...</div><div class="t" style="left:437.8px;top:230.49px;font-size:13px;line-height:13px;color:#dcdce0;font-weight:normal;font-family:'Liberation Sans',sans-serif;transform:scaleX(0.8900);transform-origin:0 0;">200</div><div class="t" style="left:496.45px;top:230.49px;font-size:13px;line-height:13px;color:#dcdce0;font-weight:normal;font-family:'Liberation Sans',sans-serif;transform:scaleX(0.9750);transform-origin:0 0;">json</div><div class="t" style="left:566.93px;top:230.49px;font-size:13px;line-height:13px;color:#dcdce0;font-weight:normal;font-family:'Liberation Sans',sans-serif;transform:scaleX(0.9212);transform-origin:0 0;">241 ms</div><div class="t" style="left:666.62px;top:230.49px;font-size:13px;line-height:13px;color:#dcdce0;font-weight:normal;font-family:'Liberation Sans',sans-serif;transform:scaleX(0.8772);transform-origin:0 0;">12:36:12.097</div><div style="left:0px;top:249.5px;width:790px;height:24px;background:#1b1b1f"></div><div class="t" style="left:11.8px;top:254.49px;font-size:13px;line-height:13px;color:#dcdce0;font-weight:normal;font-family:'Liberation Sans',sans-serif;transform:scaleX(0.8300);transform-origin:0 0;">POST</div><div class="t" style="left:83.5px;top:254.49px;font-size:13px;line-height:13px;color:#dcdce0;font-weight:normal;font-family:'Liberation Sans',sans-serif;transform:scaleX(0.9491);transform-origin:0 0;">https://safargouatapi.caxita.ca/api/hotel/SubmitPax</div><div class="t" style="left:437.8px;top:254.49px;font-size:13px;line-height:13px;color:#dcdce0;font-weight:normal;font-family:'Liberation Sans',sans-serif;transform:scaleX(0.8900);transform-origin:0 0;">200</div><div class="t" style="left:496.45px;top:254.49px;font-size:13px;line-height:13px;color:#dcdce0;font-weight:normal;font-family:'Liberation Sans',sans-serif;transform:scaleX(0.9750);transform-origin:0 0;">json</div><div class="t" style="left:566.93px;top:254.49px;font-size:13px;line-height:13px;color:#dcdce0;font-weight:normal;font-family:'Liberation Sans',sans-serif;transform:scaleX(0.9212);transform-origin:0 0;">218 ms</div><div class="t" style="left:666.62px;top:254.49px;font-size:13px;line-height:13px;color:#dcdce0;font-weight:normal;font-family:'Liberation Sans',sans-serif;transform:scaleX(0.8772);transform-origin:0 0;">12:36:13.150</div><div style="left:0px;top:273.5px;width:790px;height:24px;background:#29292d"></div><div class="t" style="left:11.8px;top:278.49px;font-size:13px;line-height:13px;color:#dcdce0;font-weight:normal;font-family:'Liberation Sans',sans-serif;transform:scaleX(0.8300);transform-origin:0 0;">POST</div><div class="t" style="left:83.5px;top:278.49px;font-size:13px;line-height:13px;color:#dcdce0;font-weight:normal;font-family:'Liberation Sans',sans-serif;transform:scaleX(0.9425);transform-origin:0 0;">https://safargouatapi.caxita.ca/api/hotel/GetAvailablePa...</div><div class="t" style="left:437.8px;top:278.49px;font-size:13px;line-height:13px;color:#dcdce0;font-weight:normal;font-family:'Liberation Sans',sans-serif;transform:scaleX(0.8900);transform-origin:0 0;">200</div><div class="t" style="left:496.45px;top:278.49px;font-size:13px;line-height:13px;color:#dcdce0;font-weight:normal;font-family:'Liberation Sans',sans-serif;transform:scaleX(0.9750);transform-origin:0 0;">json</div><div class="t" style="left:566.93px;top:278.49px;font-size:13px;line-height:13px;color:#dcdce0;font-weight:normal;font-family:'Liberation Sans',sans-serif;transform:scaleX(0.9212);transform-origin:0 0;">131 ms</div><div class="t" style="left:666.62px;top:278.49px;font-size:13px;line-height:13px;color:#dcdce0;font-weight:normal;font-family:'Liberation Sans',sans-serif;transform:scaleX(0.8772);transform-origin:0 0;">12:36:14.784</div><div style="left:0px;top:297.5px;width:790px;height:24px;background:#1b1b1f"></div><div class="t" style="left:11.8px;top:302.49px;font-size:13px;line-height:13px;color:#dcdce0;font-weight:normal;font-family:'Liberation Sans',sans-serif;transform:scaleX(0.8300);transform-origin:0 0;">POST</div><div class="t" style="left:83.5px;top:302.49px;font-size:13px;line-height:13px;color:#dcdce0;font-weight:normal;font-family:'Liberation Sans',sans-serif;transform:scaleX(0.9491);transform-origin:0 0;">https://safargouatapi.caxita.ca/api/hotel/SubmitPax</div><div class="t" style="left:437.8px;top:302.49px;font-size:13px;line-height:13px;color:#dcdce0;font-weight:normal;font-family:'Liberation Sans',sans-serif;transform:scaleX(0.8900);transform-origin:0 0;">200</div><div class="t" style="left:496.45px;top:302.49px;font-size:13px;line-height:13px;color:#dcdce0;font-weight:normal;font-family:'Liberation Sans',sans-serif;transform:scaleX(0.9750);transform-origin:0 0;">json</div><div class="t" style="left:566.93px;top:302.49px;font-size:13px;line-height:13px;color:#dcdce0;font-weight:normal;font-family:'Liberation Sans',sans-serif;transform:scaleX(0.9212);transform-origin:0 0;">227 ms</div><div class="t" style="left:666.62px;top:302.49px;font-size:13px;line-height:13px;color:#dcdce0;font-weight:normal;font-family:'Liberation Sans',sans-serif;transform:scaleX(0.8772);transform-origin:0 0;">12:37:07.803</div><div style="left:0px;top:321.5px;width:790px;height:24px;background:#5e5d62"></div><div class="t" style="left:11.8px;top:326.49px;font-size:13px;line-height:13px;color:#dcdce0;font-weight:normal;font-family:'Liberation Sans',sans-serif;transform:scaleX(0.8300);transform-origin:0 0;">POST</div><div class="t" style="left:83.5px;top:326.49px;font-size:13px;line-height:13px;color:#dcdce0;font-weight:normal;font-family:'Liberation Sans',sans-serif;transform:scaleX(0.9425);transform-origin:0 0;">https://safargouatapi.caxita.ca/api/hotel/GetAvailablePa...</div><div class="t" style="left:437.8px;top:326.49px;font-size:13px;line-height:13px;color:#dcdce0;font-weight:normal;font-family:'Liberation Sans',sans-serif;transform:scaleX(0.8900);transform-origin:0 0;">200</div><div class="t" style="left:496.45px;top:326.49px;font-size:13px;line-height:13px;color:#dcdce0;font-weight:normal;font-family:'Liberation Sans',sans-serif;transform:scaleX(0.9750);transform-origin:0 0;">json</div><div class="t" style="left:566.93px;top:326.49px;font-size:13px;line-height:13px;color:#dcdce0;font-weight:normal;font-family:'Liberation Sans',sans-serif;transform:scaleX(0.9212);transform-origin:0 0;">156 ms</div><div class="t" style="left:666.62px;top:326.49px;font-size:13px;line-height:13px;color:#dcdce0;font-weight:normal;font-family:'Liberation Sans',sans-serif;transform:scaleX(0.8772);transform-origin:0 0;">12:37:09.594</div><div style="left:0px;top:345.5px;width:790px;height:24px;background:#1b1b1f"></div><div class="t" style="left:11.8px;top:350.49px;font-size:13px;line-height:13px;color:#dcdce0;font-weight:normal;font-family:'Liberation Sans',sans-serif;transform:scaleX(0.8300);transform-origin:0 0;">SOCKET</div><div class="t" style="left:83.5px;top:350.49px;font-size:13px;line-height:13px;color:#dcdce0;font-weight:normal;font-family:'Liberation Sans',sans-serif;transform:scaleX(0.8859);transform-origin:0 0;">23.11.215.145:443</div><div class="t" style="left:419.01px;top:350.49px;font-size:13px;line-height:13px;color:#dcdce0;font-weight:normal;font-family:'Liberation Sans',sans-serif;transform:scaleX(0.9414);transform-origin:0 0;">Closed</div><div class="t" style="left:502.79px;top:350.49px;font-size:13px;line-height:13px;color:#dcdce0;font-weight:normal;font-family:'Liberation Sans',sans-serif;transform:scaleX(0.9750);transform-origin:0 0;">tcp</div><div class="t" style="left:583.92px;top:350.49px;font-size:13px;line-height:13px;color:#dcdce0;font-weight:normal;font-family:'Liberation Sans',sans-serif;transform:scaleX(0.9066);transform-origin:0 0;">22 s</div><div class="t" style="left:666.62px;top:350.49px;font-size:13px;line-height:13px;color:#dcdce0;font-weight:normal;font-family:'Liberation Sans',sans-serif;transform:scaleX(0.8772);transform-origin:0 0;">10:06:50.985</div><div style="left:0px;top:369.5px;width:790px;height:24px;background:#29292d"></div><div class="t" style="left:11.8px;top:374.49px;font-size:13px;line-height:13px;color:#dcdce0;font-weight:normal;font-family:'Liberation Sans',sans-serif;transform:scaleX(0.8300);transform-origin:0 0;">SOCKET</div><div class="t" style="left:83.5px;top:374.49px;font-size:13px;line-height:13px;color:#dcdce0;font-weight:normal;font-family:'Liberation Sans',sans-serif;transform:scaleX(0.8864);transform-origin:0 0;">203.112.134.166:443</div><div class="t" style="left:419.01px;top:374.49px;font-size:13px;line-height:13px;color:#dcdce0;font-weight:normal;font-family:'Liberation Sans',sans-serif;transform:scaleX(0.9414);transform-origin:0 0;">Closed</div><div class="t" style="left:502.79px;top:374.49px;font-size:13px;line-height:13px;color:#dcdce0;font-weight:normal;font-family:'Liberation Sans',sans-serif;transform:scaleX(0.9750);transform-origin:0 0;">tcp</div><div class="t" style="left:583.92px;top:374.49px;font-size:13px;line-height:13px;color:#dcdce0;font-weight:normal;font-family:'Liberation Sans',sans-serif;transform:scaleX(0.9066);transform-origin:0 0;">20 s</div><div class="t" style="left:666.62px;top:374.49px;font-size:13px;line-height:13px;color:#dcdce0;font-weight:normal;font-family:'Liberation Sans',sans-serif;transform:scaleX(0.8772);transform-origin:0 0;">10:07:00.212</div><div style="left:0px;top:393.5px;width:790px;height:24px;background:#1b1b1f"></div><div class="t" style="left:11.8px;top:398.49px;font-size:13px;line-height:13px;color:#dcdce0;font-weight:normal;font-family:'Liberation Sans',sans-serif;transform:scaleX(0.8300);transform-origin:0 0;">SOCKET</div><div class="t" style="left:83.5px;top:398.49px;font-size:13px;line-height:13px;color:#dcdce0;font-weight:normal;font-family:'Liberation Sans',sans-serif;transform:scaleX(0.8864);transform-origin:0 0;">203.112.134.166:443</div><div class="t" style="left:419.01px;top:398.49px;font-size:13px;line-height:13px;color:#dcdce0;font-weight:normal;font-family:'Liberation Sans',sans-serif;transform:scaleX(0.9414);transform-origin:0 0;">Closed</div><div class="t" style="left:502.79px;top:398.49px;font-size:13px;line-height:13px;color:#dcdce0;font-weight:normal;font-family:'Liberation Sans',sans-serif;transform:scaleX(0.9750);transform-origin:0 0;">tcp</div><div class="t" style="left:583.92px;top:398.49px;font-size:13px;line-height:13px;color:#dcdce0;font-weight:normal;font-family:'Liberation Sans',sans-serif;transform:scaleX(0.9066);transform-origin:0 0;">17 s</div><div class="t" style="left:666.62px;top:398.49px;font-size:13px;line-height:13px;color:#dcdce0;font-weight:normal;font-family:'Liberation Sans',sans-serif;transform:scaleX(0.8772);transform-origin:0 0;">10:07:14.828</div><div style="left:0px;top:417.5px;width:790px;height:24px;background:#29292d"></div><div class="t" style="left:11.8px;top:422.49px;font-size:13px;line-height:13px;color:#dcdce0;font-weight:normal;font-family:'Liberation Sans',sans-serif;transform:scaleX(0.8300);transform-origin:0 0;">SOCKET</div><div class="t" style="left:83.5px;top:422.49px;font-size:13px;line-height:13px;color:#dcdce0;font-weight:normal;font-family:'Liberation Sans',sans-serif;transform:scaleX(0.8864);transform-origin:0 0;">203.112.134.166:443</div><div class="t" style="left:419.01px;top:422.49px;font-size:13px;line-height:13px;color:#dcdce0;font-weight:normal;font-family:'Liberation Sans',sans-serif;transform:scaleX(0.9414);transform-origin:0 0;">Closed</div><div class="t" style="left:502.79px;top:422.49px;font-size:13px;line-height:13px;color:#dcdce0;font-weight:normal;font-family:'Liberation Sans',sans-serif;transform:scaleX(0.9750);transform-origin:0 0;">tcp</div><div class="t" style="left:583.92px;top:422.49px;font-size:13px;line-height:13px;color:#dcdce0;font-weight:normal;font-family:'Liberation Sans',sans-serif;transform:scaleX(0.9066);transform-origin:0 0;">15 s</div><div class="t" style="left:666.62px;top:422.49px;font-size:13px;line-height:13px;color:#dcdce0;font-weight:normal;font-family:'Liberation Sans',sans-serif;transform:scaleX(0.8772);transform-origin:0 0;">10:07:15.249</div><div style="left:0px;top:441.5px;width:790px;height:24px;background:#1b1b1f"></div><div class="t" style="left:11.8px;top:446.49px;font-size:13px;line-height:13px;color:#dcdce0;font-weight:normal;font-family:'Liberation Sans',sans-serif;transform:scaleX(0.8300);transform-origin:0 0;">SOCKET</div><div class="t" style="left:83.5px;top:446.49px;font-size:13px;line-height:13px;color:#dcdce0;font-weight:normal;font-family:'Liberation Sans',sans-serif;transform:scaleX(0.8864);transform-origin:0 0;">203.112.134.166:443</div><div class="t" style="left:419.01px;top:446.49px;font-size:13px;line-height:13px;color:#dcdce0;font-weight:normal;font-family:'Liberation Sans',sans-serif;transform:scaleX(0.9414);transform-origin:0 0;">Closed</div><div class="t" style="left:502.79px;top:446.49px;font-size:13px;line-height:13px;color:#dcdce0;font-weight:normal;font-family:'Liberation Sans',sans-serif;transform:scaleX(0.9750);transform-origin:0 0;">tcp</div><div class="t" style="left:583.92px;top:446.49px;font-size:13px;line-height:13px;color:#dcdce0;font-weight:normal;font-family:'Liberation Sans',sans-serif;transform:scaleX(0.9066);transform-origin:0 0;">15 s</div><div class="t" style="left:666.62px;top:446.49px;font-size:13px;line-height:13px;color:#dcdce0;font-weight:normal;font-family:'Liberation Sans',sans-serif;transform:scaleX(0.8772);transform-origin:0 0;">10:07:20.432</div><div style="left:0px;top:465.5px;width:790px;height:24px;background:#29292d"></div><div class="t" style="left:11.8px;top:470.49px;font-size:13px;line-height:13px;color:#dcdce0;font-weight:normal;font-family:'Liberation Sans',sans-serif;transform:scaleX(0.8300);transform-origin:0 0;">SOCKET</div><div class="t" style="left:83.5px;top:470.49px;font-size:13px;line-height:13px;color:#dcdce0;font-weight:normal;font-family:'Liberation Sans',sans-serif;transform:scaleX(0.8864);transform-origin:0 0;">203.112.134.166:443</div><div class="t" style="left:419.01px;top:470.49px;font-size:13px;line-height:13px;color:#dcdce0;font-weight:normal;font-family:'Liberation Sans',sans-serif;transform:scaleX(0.9414);transform-origin:0 0;">Closed</div><div class="t" style="left:502.79px;top:470.49px;font-size:13px;line-height:13px;color:#dcdce0;font-weight:normal;font-family:'Liberation Sans',sans-serif;transform:scaleX(0.9750);transform-origin:0 0;">tcp</div><div class="t" style="left:583.92px;top:470.49px;font-size:13px;line-height:13px;color:#dcdce0;font-weight:normal;font-family:'Liberation Sans',sans-serif;transform:scaleX(0.9066);transform-origin:0 0;">15 s</div><div class="t" style="left:666.62px;top:470.49px;font-size:13px;line-height:13px;color:#dcdce0;font-weight:normal;font-family:'Liberation Sans',sans-serif;transform:scaleX(0.8772);transform-origin:0 0;">10:10:12.758</div><div style="left:0px;top:489.5px;width:790px;height:24px;background:#1b1b1f"></div><div class="t" style="left:11.8px;top:494.49px;font-size:13px;line-height:13px;color:#dcdce0;font-weight:normal;font-family:'Liberation Sans',sans-serif;transform:scaleX(0.8300);transform-origin:0 0;">SOCKET</div><div class="t" style="left:83.5px;top:494.49px;font-size:13px;line-height:13px;color:#dcdce0;font-weight:normal;font-family:'Liberation Sans',sans-serif;transform:scaleX(0.8864);transform-origin:0 0;">203.112.134.166:443</div><div class="t" style="left:419.01px;top:494.49px;font-size:13px;line-height:13px;color:#dcdce0;font-weight:normal;font-family:'Liberation Sans',sans-serif;transform:scaleX(0.9414);transform-origin:0 0;">Closed</div><div class="t" style="left:502.79px;top:494.49px;font-size:13px;line-height:13px;color:#dcdce0;font-weight:normal;font-family:'Liberation Sans',sans-serif;transform:scaleX(0.9750);transform-origin:0 0;">tcp</div><div class="t" style="left:573.36px;top:494.49px;font-size:13px;line-height:13px;color:#dcdce0;font-weight:normal;font-family:'Liberation Sans',sans-serif;transform:scaleX(0.9275);transform-origin:0 0;">95 ms</div><div class="t" style="left:666.62px;top:494.49px;font-size:13px;line-height:13px;color:#dcdce0;font-weight:normal;font-family:'Liberation Sans',sans-serif;transform:scaleX(0.8884);transform-origin:0 0;">10:11:09.513</div><div style="left:0px;top:513.5px;width:790px;height:24px;background:#29292d"></div><div class="t" style="left:11.8px;top:518.49px;font-size:13px;line-height:13px;color:#dcdce0;font-weight:normal;font-family:'Liberation Sans',sans-serif;transform:scaleX(0.8300);transform-origin:0 0;">SOCKET</div><div class="t" style="left:83.5px;top:518.49px;font-size:13px;line-height:13px;color:#dcdce0;font-weight:normal;font-family:'Liberation Sans',sans-serif;transform:scaleX(0.8864);transform-origin:0 0;">203.112.134.166:443</div><div class="t" style="left:419.01px;top:518.49px;font-size:13px;line-height:13px;color:#dcdce0;font-weight:normal;font-family:'Liberation Sans',sans-serif;transform:scaleX(0.9414);transform-origin:0 0;">Closed</div><div class="t" style="left:502.79px;top:518.49px;font-size:13px;line-height:13px;color:#dcdce0;font-weight:normal;font-family:'Liberation Sans',sans-serif;transform:scaleX(0.9750);transform-origin:0 0;">tcp</div><div class="t" style="left:583.92px;top:518.49px;font-size:13px;line-height:13px;color:#dcdce0;font-weight:normal;font-family:'Liberation Sans',sans-serif;transform:scaleX(0.9066);transform-origin:0 0;">19 s</div><div class="t" style="left:666.62px;top:518.49px;font-size:13px;line-height:13px;color:#dcdce0;font-weight:normal;font-family:'Liberation Sans',sans-serif;transform:scaleX(0.8884);transform-origin:0 0;">10:11:13.478</div><div style="left:0px;top:537.5px;width:790px;height:24px;background:#1b1b1f"></div><div class="t" style="left:11.8px;top:542.49px;font-size:13px;line-height:13px;color:#dcdce0;font-weight:normal;font-family:'Liberation Sans',sans-serif;transform:scaleX(0.8300);transform-origin:0 0;">SOCKET</div><div class="t" style="left:83.5px;top:542.49px;font-size:13px;line-height:13px;color:#dcdce0;font-weight:normal;font-family:'Liberation Sans',sans-serif;transform:scaleX(0.8859);transform-origin:0 0;">23.11.215.138:443</div><div class="t" style="left:419.01px;top:542.49px;font-size:13px;line-height:13px;color:#dcdce0;font-weight:normal;font-family:'Liberation Sans',sans-serif;transform:scaleX(0.9414);transform-origin:0 0;">Closed</div><div class="t" style="left:502.79px;top:542.49px;font-size:13px;line-height:13px;color:#dcdce0;font-weight:normal;font-family:'Liberation Sans',sans-serif;transform:scaleX(0.9750);transform-origin:0 0;">tcp</div><div class="t" style="left:583.92px;top:542.49px;font-size:13px;line-height:13px;color:#dcdce0;font-weight:normal;font-family:'Liberation Sans',sans-serif;transform:scaleX(0.9066);transform-origin:0 0;">15 s</div><div class="t" style="left:666.62px;top:542.49px;font-size:13px;line-height:13px;color:#dcdce0;font-weight:normal;font-family:'Liberation Sans',sans-serif;transform:scaleX(0.8884);transform-origin:0 0;">10:11:17.954</div><div style="left:0px;top:561.5px;width:790px;height:24px;background:#29292d"></div><div class="t" style="left:11.8px;top:566.49px;font-size:13px;line-height:13px;color:#dcdce0;font-weight:normal;font-family:'Liberation Sans',sans-serif;transform:scaleX(0.8300);transform-origin:0 0;">SOCKET</div><div class="t" style="left:83.5px;top:566.49px;font-size:13px;line-height:13px;color:#dcdce0;font-weight:normal;font-family:'Liberation Sans',sans-serif;transform:scaleX(0.8859);transform-origin:0 0;">23.11.215.145:443</div><div class="t" style="left:419.01px;top:566.49px;font-size:13px;line-height:13px;color:#dcdce0;font-weight:normal;font-family:'Liberation Sans',sans-serif;transform:scaleX(0.9414);transform-origin:0 0;">Closed</div><div class="t" style="left:502.79px;top:566.49px;font-size:13px;line-height:13px;color:#dcdce0;font-weight:normal;font-family:'Liberation Sans',sans-serif;transform:scaleX(0.9750);transform-origin:0 0;">tcp</div><div class="t" style="left:583.92px;top:566.49px;font-size:13px;line-height:13px;color:#dcdce0;font-weight:normal;font-family:'Liberation Sans',sans-serif;transform:scaleX(0.9066);transform-origin:0 0;">15 s</div><div class="t" style="left:666.62px;top:566.49px;font-size:13px;line-height:13px;color:#dcdce0;font-weight:normal;font-family:'Liberation Sans',sans-serif;transform:scaleX(0.8884);transform-origin:0 0;">10:11:17.956</div><div style="left:0px;top:585.5px;width:790px;height:24px;background:#1b1b1f"></div><div class="t" style="left:11.8px;top:590.49px;font-size:13px;line-height:13px;color:#dcdce0;font-weight:normal;font-family:'Liberation Sans',sans-serif;transform:scaleX(0.8300);transform-origin:0 0;">SOCKET</div><div class="t" style="left:83.5px;top:590.49px;font-size:13px;line-height:13px;color:#dcdce0;font-weight:normal;font-family:'Liberation Sans',sans-serif;transform:scaleX(0.8859);transform-origin:0 0;">23.11.215.138:443</div><div class="t" style="left:419.01px;top:590.49px;font-size:13px;line-height:13px;color:#dcdce0;font-weight:normal;font-family:'Liberation Sans',sans-serif;transform:scaleX(0.9414);transform-origin:0 0;">Closed</div><div class="t" style="left:502.79px;top:590.49px;font-size:13px;line-height:13px;color:#dcdce0;font-weight:normal;font-family:'Liberation Sans',sans-serif;transform:scaleX(0.9750);transform-origin:0 0;">tcp</div><div class="t" style="left:583.92px;top:590.49px;font-size:13px;line-height:13px;color:#dcdce0;font-weight:normal;font-family:'Liberation Sans',sans-serif;transform:scaleX(0.9066);transform-origin:0 0;">15 s</div><div class="t" style="left:666.62px;top:590.49px;font-size:13px;line-height:13px;color:#dcdce0;font-weight:normal;font-family:'Liberation Sans',sans-serif;transform:scaleX(0.8884);transform-origin:0 0;">10:11:17.958</div><div style="left:0px;top:609.5px;width:790px;height:24px;background:#29292d"></div><div class="t" style="left:11.8px;top:614.49px;font-size:13px;line-height:13px;color:#dcdce0;font-weight:normal;font-family:'Liberation Sans',sans-serif;transform:scaleX(0.8300);transform-origin:0 0;">SOCKET</div><div class="t" style="left:83.5px;top:614.49px;font-size:13px;line-height:13px;color:#dcdce0;font-weight:normal;font-family:'Liberation Sans',sans-serif;transform:scaleX(0.8859);transform-origin:0 0;">23.11.215.145:443</div><div class="t" style="left:419.01px;top:614.49px;font-size:13px;line-height:13px;color:#dcdce0;font-weight:normal;font-family:'Liberation Sans',sans-serif;transform:scaleX(0.9414);transform-origin:0 0;">Closed</div><div class="t" style="left:502.79px;top:614.49px;font-size:13px;line-height:13px;color:#dcdce0;font-weight:normal;font-family:'Liberation Sans',sans-serif;transform:scaleX(0.9750);transform-origin:0 0;">tcp</div><div class="t" style="left:583.92px;top:614.49px;font-size:13px;line-height:13px;color:#dcdce0;font-weight:normal;font-family:'Liberation Sans',sans-serif;transform:scaleX(0.9066);transform-origin:0 0;">15 s</div><div class="t" style="left:666.62px;top:614.49px;font-size:13px;line-height:13px;color:#dcdce0;font-weight:normal;font-family:'Liberation Sans',sans-serif;transform:scaleX(0.8884);transform-origin:0 0;">10:11:17.983</div><div style="left:0px;top:633.5px;width:790px;height:24px;background:#1b1b1f"></div><div class="t" style="left:11.8px;top:638.49px;font-size:13px;line-height:13px;color:#dcdce0;font-weight:normal;font-family:'Liberation Sans',sans-serif;transform:scaleX(0.8300);transform-origin:0 0;">SOCKET</div><div class="t" style="left:83.5px;top:638.49px;font-size:13px;line-height:13px;color:#dcdce0;font-weight:normal;font-family:'Liberation Sans',sans-serif;transform:scaleX(0.8864);transform-origin:0 0;">203.112.134.166:443</div><div class="t" style="left:419.01px;top:638.49px;font-size:13px;line-height:13px;color:#dcdce0;font-weight:normal;font-family:'Liberation Sans',sans-serif;transform:scaleX(0.9414);transform-origin:0 0;">Closed</div><div class="t" style="left:502.79px;top:638.49px;font-size:13px;line-height:13px;color:#dcdce0;font-weight:normal;font-family:'Liberation Sans',sans-serif;transform:scaleX(0.9750);transform-origin:0 0;">tcp</div><div class="t" style="left:583.92px;top:638.49px;font-size:13px;line-height:13px;color:#dcdce0;font-weight:normal;font-family:'Liberation Sans',sans-serif;transform:scaleX(0.9066);transform-origin:0 0;">16 s</div><div class="t" style="left:666.62px;top:638.49px;font-size:13px;line-height:13px;color:#dcdce0;font-weight:normal;font-family:'Liberation Sans',sans-serif;transform:scaleX(0.8884);transform-origin:0 0;">10:11:22.724</div><div style="left:0px;top:657.5px;width:790px;height:24px;background:#29292d"></div><div class="t" style="left:11.8px;top:662.49px;font-size:13px;line-height:13px;color:#dcdce0;font-weight:normal;font-family:'Liberation Sans',sans-serif;transform:scaleX(0.8300);transform-origin:0 0;">SOCKET</div><div class="t" style="left:83.5px;top:662.49px;font-size:13px;line-height:13px;color:#dcdce0;font-weight:normal;font-family:'Liberation Sans',sans-serif;transform:scaleX(0.8864);transform-origin:0 0;">203.112.134.166:443</div><div class="t" style="left:419.01px;top:662.49px;font-size:13px;line-height:13px;color:#dcdce0;font-weight:normal;font-family:'Liberation Sans',sans-serif;transform:scaleX(0.9414);transform-origin:0 0;">Closed</div><div class="t" style="left:502.79px;top:662.49px;font-size:13px;line-height:13px;color:#dcdce0;font-weight:normal;font-family:'Liberation Sans',sans-serif;transform:scaleX(0.9750);transform-origin:0 0;">tcp</div><div class="t" style="left:583.92px;top:662.49px;font-size:13px;line-height:13px;color:#dcdce0;font-weight:normal;font-family:'Liberation Sans',sans-serif;transform:scaleX(0.9066);transform-origin:0 0;">15 s</div><div class="t" style="left:666.62px;top:662.49px;font-size:13px;line-height:13px;color:#dcdce0;font-weight:normal;font-family:'Liberation Sans',sans-serif;transform:scaleX(0.8884);transform-origin:0 0;">10:11:23.022</div><div style="left:0px;top:681.5px;width:790px;height:24px;background:#1b1b1f"></div><div class="t" style="left:11.8px;top:686.49px;font-size:13px;line-height:13px;color:#dcdce0;font-weight:normal;font-family:'Liberation Sans',sans-serif;transform:scaleX(0.8300);transform-origin:0 0;">SOCKET</div><div class="t" style="left:83.5px;top:686.49px;font-size:13px;line-height:13px;color:#dcdce0;font-weight:normal;font-family:'Liberation Sans',sans-serif;transform:scaleX(0.8864);transform-origin:0 0;">203.112.134.166:443</div><div class="t" style="left:419.01px;top:686.49px;font-size:13px;line-height:13px;color:#dcdce0;font-weight:normal;font-family:'Liberation Sans',sans-serif;transform:scaleX(0.9414);transform-origin:0 0;">Closed</div><div class="t" style="left:502.79px;top:686.49px;font-size:13px;line-height:13px;color:#dcdce0;font-weight:normal;font-family:'Liberation Sans',sans-serif;transform:scaleX(0.9750);transform-origin:0 0;">tcp</div><div class="t" style="left:583.92px;top:686.49px;font-size:13px;line-height:13px;color:#dcdce0;font-weight:normal;font-family:'Liberation Sans',sans-serif;transform:scaleX(0.9066);transform-origin:0 0;">15 s</div><div class="t" style="left:666.62px;top:686.49px;font-size:13px;line-height:13px;color:#dcdce0;font-weight:normal;font-family:'Liberation Sans',sans-serif;transform:scaleX(0.8884);transform-origin:0 0;">10:11:25.626</div><div style="left:0px;top:705.5px;width:790px;height:24px;background:#29292d"></div><div class="t" style="left:11.8px;top:710.49px;font-size:13px;line-height:13px;color:#dcdce0;font-weight:normal;font-family:'Liberation Sans',sans-serif;transform:scaleX(0.8300);transform-origin:0 0;">SOCKET</div><div class="t" style="left:83.5px;top:710.49px;font-size:13px;line-height:13px;color:#dcdce0;font-weight:normal;font-family:'Liberation Sans',sans-serif;transform:scaleX(0.8864);transform-origin:0 0;">203.112.134.166:443</div><div class="t" style="left:419.01px;top:710.49px;font-size:13px;line-height:13px;color:#dcdce0;font-weight:normal;font-family:'Liberation Sans',sans-serif;transform:scaleX(0.9414);transform-origin:0 0;">Closed</div><div class="t" style="left:502.79px;top:710.49px;font-size:13px;line-height:13px;color:#dcdce0;font-weight:normal;font-family:'Liberation Sans',sans-serif;transform:scaleX(0.9750);transform-origin:0 0;">tcp</div><div class="t" style="left:583.92px;top:710.49px;font-size:13px;line-height:13px;color:#dcdce0;font-weight:normal;font-family:'Liberation Sans',sans-serif;transform:scaleX(0.9066);transform-origin:0 0;">15 s</div><div class="t" style="left:666.62px;top:710.49px;font-size:13px;line-height:13px;color:#dcdce0;font-weight:normal;font-family:'Liberation Sans',sans-serif;transform:scaleX(0.8772);transform-origin:0 0;">10:12:18.656</div><div style="left:0px;top:729.5px;width:790px;height:24px;background:#1b1b1f"></div><div class="t" style="left:11.8px;top:734.49px;font-size:13px;line-height:13px;color:#dcdce0;font-weight:normal;font-family:'Liberation Sans',sans-serif;transform:scaleX(0.8300);transform-origin:0 0;">SOCKET</div><div class="t" style="left:83.5px;top:734.49px;font-size:13px;line-height:13px;color:#dcdce0;font-weight:normal;font-family:'Liberation Sans',sans-serif;transform:scaleX(0.8864);transform-origin:0 0;">203.112.134.166:443</div><div class="t" style="left:419.01px;top:734.49px;font-size:13px;line-height:13px;color:#dcdce0;font-weight:normal;font-family:'Liberation Sans',sans-serif;transform:scaleX(0.9414);transform-origin:0 0;">Closed</div><div class="t" style="left:502.79px;top:734.49px;font-size:13px;line-height:13px;color:#dcdce0;font-weight:normal;font-family:'Liberation Sans',sans-serif;transform:scaleX(0.9750);transform-origin:0 0;">tcp</div><div class="t" style="left:583.92px;top:734.49px;font-size:13px;line-height:13px;color:#dcdce0;font-weight:normal;font-family:'Liberation Sans',sans-serif;transform:scaleX(0.9066);transform-origin:0 0;">15 s</div><div class="t" style="left:666.62px;top:734.49px;font-size:13px;line-height:13px;color:#dcdce0;font-weight:normal;font-family:'Liberation Sans',sans-serif;transform:scaleX(0.8772);transform-origin:0 0;">10:12:20.435</div><div style="left:0px;top:0px;width:790px;height:27px;background:#1b1b1f"></div><div style="left:0px;top:27px;width:790px;height:1px;background:#3c3c41"></div><div class="t" style="left:11.8px;top:6.49px;font-size:13px;line-height:13px;color:#d4d4d8;font-weight:bold;font-family:'Liberation Sans',sans-serif;transform:scaleX(0.8742);transform-origin:0 0;">Method</div><div class="t" style="left:83.5px;top:6.49px;font-size:13px;line-height:13px;color:#d4d4d8;font-weight:bold;font-family:'Liberation Sans',sans-serif;transform:scaleX(0.8401);transform-origin:0 0;">Address</div><div class="t" style="left:422.1px;top:6.49px;font-size:13px;line-height:13px;color:#d4d4d8;font-weight:bold;font-family:'Liberation Sans',sans-serif;transform:scaleX(0.8809);transform-origin:0 0;">Status</div><div class="t" style="left:494.7px;top:6.49px;font-size:13px;line-height:13px;color:#d4d4d8;font-weight:bold;font-family:'Liberation Sans',sans-serif;transform:scaleX(0.8510);transform-origin:0 0;">Type</div><div class="t" style="left:560.2px;top:6.49px;font-size:13px;line-height:13px;color:#d4d4d8;font-weight:bold;font-family:'Liberation Sans',sans-serif;transform:scaleX(0.8607);transform-origin:0 0;">Duration</div><div class="t" style="left:673.2px;top:6.49px;font-size:13px;line-height:13px;color:#d4d4d8;font-weight:bold;font-family:'Liberation Sans',sans-serif;transform:scaleX(0.8772);transform-origin:0 0;">Timestamp</div><svg style="position:absolute;left:619.5px;top:8.5px;" width="12" height="8" viewBox="0 0 12 8"><path d="M2 6l4-4 4 4" stroke="#d4d4d8" stroke-width="1.8" fill="none"/></svg><div style="left:77.0px;top:0px;width:1px;height:755px;background:#3c3c41"></div><div style="left:401.0px;top:0px;width:1px;height:755px;background:#3c3c41"></div><div style="left:463.0px;top:0px;width:1px;height:755px;background:#3c3c41"></div><div style="left:525.0px;top:0px;width:1px;height:755px;background:#3c3c41"></div><div style="left:612.0px;top:0px;width:1px;height:755px;background:#3c3c41"></div><div style="left:738.5px;top:0px;width:1px;height:755px;background:#3c3c41"></div><div style="left:779.5px;top:204.5px;width:8px;height:560px;background:rgba(255,255,255,0.22);border-radius:4px"></div><svg style="position:absolute;left:767.5px;top:329.5px;" width="6" height="9" viewBox="0 0 6 9"><rect x="1.8" y="0.8" width="2.4" height="2.4" fill="#e0e0e0"/><rect x="1.8" y="3.8" width="2.4" height="2.4" fill="#e0e0e0"/><rect x="1.8" y="6.8" width="2.4" height="2.4" fill="#e0e0e0"/></svg></div><div style="left:901.5px;top:246.5px;width:528px;height:755px;border:1px solid #3c3c41;border-radius:14px"></div><div style="left:902.5px;top:275px;width:526px;height:2px;background:#3c3c41"></div><div class="t" style="left:917px;top:253.42px;font-size:12.5px;line-height:12.5px;color:#d4d4d8;font-weight:bold;font-family:'Liberation Sans',sans-serif;transform:scaleX(0.8994);transform-origin:0 0;">Overview</div><div class="t" style="left:995.6px;top:253.42px;font-size:12.5px;line-height:12.5px;color:#d4d4d8;font-weight:bold;font-family:'Liberation Sans',sans-serif;transform:scaleX(0.9222);transform-origin:0 0;">Headers</div><div class="t" style="left:1069.6px;top:253.42px;font-size:12.5px;line-height:12.5px;color:#d4d4d8;font-weight:bold;font-family:'Liberation Sans',sans-serif;transform:scaleX(0.9064);transform-origin:0 0;">Request</div><div class="t" style="left:1142.7px;top:253.42px;font-size:12.5px;line-height:12.5px;color:#e4e4e8;font-weight:bold;font-family:'Liberation Sans',sans-serif;transform:scaleX(0.9039);transform-origin:0 0;">Response</div><div style="left:1143px;top:272px;width:54px;height:4px;background:#a8c7fa;border-radius:2px 2px 0 0"></div><div style="left:1345px;top:248px;width:65px;height:27px;border:1px solid #3c3c41;border-radius:13px"></div><div class="t" style="left:1357.8px;top:254.99px;font-size:13px;line-height:13px;color:#d4d4d8;font-weight:normal;font-family:'Liberation Sans',sans-serif;transform:scaleX(0.9348);transform-origin:0 0;">Auto</div><svg style="position:absolute;left:1390px;top:257px;" width="12" height="8" viewBox="0 0 12 8"><path d="M1 1h10L6 7z" fill="#d4d4d8"/></svg><svg style="position:absolute;left:1413px;top:252px;" width="14" height="16" viewBox="0 0 14 16"><rect x="4" y="4" width="8.5" height="10.5" stroke="#d4d4d8" stroke-width="1.5" fill="none"/><path d="M1.5 12V1.5H10" stroke="#d4d4d8" stroke-width="1.5" fill="none"/></svg><svg style="position:absolute;left:921.5px;top:299.8px;" width="9" height="7" viewBox="0 0 9 7"><path d="M1 1.5l3.5 3.5 3.5-3.5" stroke="#e6e6e6" stroke-width="1.7" fill="none"/></svg><div class="t" style="left:933.5px;top:299.10px;font-size:11.35px;line-height:11.35px;color:#ddd;font-weight:normal;font-family:'Liberation Mono',monospace;white-space:pre"><span style="color:#b0b0b4">[root]: </span><span style="color:#b0b0b4">Map (5 items)</span></div><div class="t" style="left:945.5px;top:319.10px;font-size:11.35px;line-height:11.35px;color:#ddd;font-weight:normal;font-family:'Liberation Mono',monospace;white-space:pre"><span style="color:#cf9ecd">Version</span><span style="color:#d4d4d8">: </span><span style="color:#e4a07e">'1.0'</span></div><div class="t" style="left:945.5px;top:339.10px;font-size:11.35px;line-height:11.35px;color:#ddd;font-weight:normal;font-family:'Liberation Mono',monospace;white-space:pre"><span style="color:#cf9ecd">Code</span><span style="color:#d4d4d8">: </span><span style="color:#e4a07e">'200'</span></div><svg style="position:absolute;left:935.5px;top:357.8px;" width="7" height="9" viewBox="0 0 7 9"><path d="M1.5 1l3.5 3.5-3.5 3.5" stroke="#e6e6e6" stroke-width="1.7" fill="none"/></svg><div class="t" style="left:945.5px;top:359.10px;font-size:11.35px;line-height:11.35px;color:#ddd;font-weight:normal;font-family:'Liberation Mono',monospace;white-space:pre"><span style="color:#cf9ecd">Message</span><span style="color:#d4d4d8">: </span><span style="color:#b0b0b4">List (1 item)</span></div><div class="t" style="left:945.5px;top:379.10px;font-size:11.35px;line-height:11.35px;color:#ddd;font-weight:normal;font-family:'Liberation Mono',monospace;white-space:pre"><span style="color:#cf9ecd">SessionKey</span><span style="color:#d4d4d8">: </span><span style="color:#e4a07e">'da4ea59b-5fc7-40b5-aa2d-4f3b1fc0246c'</span></div><svg style="position:absolute;left:933.5px;top:399.8px;" width="9" height="7" viewBox="0 0 9 7"><path d="M1 1.5l3.5 3.5 3.5-3.5" stroke="#e6e6e6" stroke-width="1.7" fill="none"/></svg><div class="t" style="left:945.5px;top:399.10px;font-size:11.35px;line-height:11.35px;color:#ddd;font-weight:normal;font-family:'Liberation Mono',monospace;white-space:pre"><span style="color:#cf9ecd">Data</span><span style="color:#d4d4d8">: </span><span style="color:#b0b0b4">Map (4 items)</span></div><div class="t" style="left:957.5px;top:419.10px;font-size:11.35px;line-height:11.35px;color:#ddd;font-weight:normal;font-family:'Liberation Mono',monospace;white-space:pre"><span style="color:#cf9ecd">ProcessId</span><span style="color:#d4d4d8">: </span><span style="color:#e4a07e">'P-D2D511Stay-11-2-110004-1-I'</span></div><div class="t" style="left:957.5px;top:439.10px;font-size:11.35px;line-height:11.35px;color:#ddd;font-weight:normal;font-family:'Liberation Mono',monospace;white-space:pre"><span style="color:#cf9ecd">CanBookable</span><span style="color:#d4d4d8">: </span><span style="color:#5fa7e8">true</span></div><svg style="position:absolute;left:945.5px;top:459.8px;" width="9" height="7" viewBox="0 0 9 7"><path d="M1 1.5l3.5 3.5 3.5-3.5" stroke="#e6e6e6" stroke-width="1.7" fill="none"/></svg><div class="t" style="left:957.5px;top:459.10px;font-size:11.35px;line-height:11.35px;color:#ddd;font-weight:normal;font-family:'Liberation Mono',monospace;white-space:pre"><span style="color:#cf9ecd">AvailablePaymentGateways</span><span style="color:#d4d4d8">: </span><span style="color:#b0b0b4">List (1 item)</span></div><svg style="position:absolute;left:957.5px;top:479.8px;" width="9" height="7" viewBox="0 0 9 7"><path d="M1 1.5l3.5 3.5 3.5-3.5" stroke="#e6e6e6" stroke-width="1.7" fill="none"/></svg><div class="t" style="left:969.5px;top:479.10px;font-size:11.35px;line-height:11.35px;color:#ddd;font-weight:normal;font-family:'Liberation Mono',monospace;white-space:pre"><span style="color:#b0b0b4">[0]: </span><span style="color:#b0b0b4">Map (11 items)</span></div><div style="left:981px;top:553.5px;width:431.5px;height:19.5px;background:#4a4a4d"></div><svg style="position:absolute;left:1392px;top:556px;" width="14" height="15" viewBox="0 0 14 15"><rect x="4" y="4" width="8" height="9.5" stroke="#d4d4d8" stroke-width="1.4" fill="none"/><path d="M1.5 11V1.5H9.5" stroke="#d4d4d8" stroke-width="1.4" fill="none"/></svg><div class="t" style="left:981.5px;top:499.10px;font-size:11.35px;line-height:11.35px;color:#ddd;font-weight:normal;font-family:'Liberation Mono',monospace;white-space:pre"><span style="color:#cf9ecd">GateWayId</span><span style="color:#d4d4d8">: </span><span style="color:#b5cea8">30</span></div><div class="t" style="left:981.5px;top:519.10px;font-size:11.35px;line-height:11.35px;color:#ddd;font-weight:normal;font-family:'Liberation Mono',monospace;white-space:pre"><span style="color:#cf9ecd">GateWayName</span><span style="color:#d4d4d8">: </span><span style="color:#e4a07e">'Tap Knet'</span></div><div class="t" style="left:981.5px;top:539.10px;font-size:11.35px;line-height:11.35px;color:#ddd;font-weight:normal;font-family:'Liberation Mono',monospace;white-space:pre"><span style="color:#cf9ecd">ServiceCharge</span><span style="color:#d4d4d8">: </span><span style="color:#e4a07e">'15.000'</span></div><div class="t" style="left:981.5px;top:559.10px;font-size:11.35px;line-height:11.35px;color:#ddd;font-weight:normal;font-family:'Liberation Mono',monospace;white-space:pre"><span style="color:#cf9ecd">Currency</span><span style="color:#d4d4d8">: </span><span style="color:#e4a07e">'KWD'</span></div><div class="t" style="left:981.5px;top:579.10px;font-size:11.35px;line-height:11.35px;color:#ddd;font-weight:normal;font-family:'Liberation Mono',monospace;white-space:pre"><span style="color:#cf9ecd">URL</span><span style="color:#d4d4d8">: </span><span style="color:#5fa7e8">Null</span></div><div class="t" style="left:981.5px;top:599.10px;font-size:11.35px;line-height:11.35px;color:#ddd;font-weight:normal;font-family:'Liberation Mono',monospace;white-space:pre"><span style="color:#cf9ecd">IsThirdParty</span><span style="color:#d4d4d8">: </span><span style="color:#5fa7e8">false</span></div><div class="t" style="left:981.5px;top:619.10px;font-size:11.35px;line-height:11.35px;color:#ddd;font-weight:normal;font-family:'Liberation Mono',monospace;white-space:pre"><span style="color:#cf9ecd">IsPercentage</span><span style="color:#d4d4d8">: </span><span style="color:#5fa7e8">false</span></div><div class="t" style="left:981.5px;top:639.10px;font-size:11.35px;line-height:11.35px;color:#ddd;font-weight:normal;font-family:'Liberation Mono',monospace;white-space:pre"><span style="color:#cf9ecd">IsDefault</span><span style="color:#d4d4d8">: </span><span style="color:#5fa7e8">false</span></div><div class="t" style="left:981.5px;top:659.10px;font-size:11.35px;line-height:11.35px;color:#ddd;font-weight:normal;font-family:'Liberation Mono',monospace;white-space:pre"><span style="color:#cf9ecd">CardTypeBasedCharges</span><span style="color:#d4d4d8">: </span><span style="color:#b0b0b4">List (0 items)</span></div><svg style="position:absolute;left:971.5px;top:677.8px;" width="7" height="9" viewBox="0 0 7 9"><path d="M1.5 1l3.5 3.5-3.5 3.5" stroke="#e6e6e6" stroke-width="1.7" fill="none"/></svg><div class="t" style="left:981.5px;top:679.10px;font-size:11.35px;line-height:11.35px;color:#ddd;font-weight:normal;font-family:'Liberation Mono',monospace;white-space:pre"><span style="color:#cf9ecd">PgPriceRangeList</span><span style="color:#d4d4d8">: </span><span style="color:#b0b0b4">List (1 item)</span></div><div class="t" style="left:981.5px;top:699.10px;font-size:11.35px;line-height:11.35px;color:#ddd;font-weight:normal;font-family:'Liberation Mono',monospace;white-space:pre"><span style="color:#cf9ecd">LimitAmount</span><span style="color:#d4d4d8">: </span><span style="color:#b5cea8">0</span></div><svg style="position:absolute;left:947.5px;top:717.8px;" width="7" height="9" viewBox="0 0 7 9"><path d="M1.5 1l3.5 3.5-3.5 3.5" stroke="#e6e6e6" stroke-width="1.7" fill="none"/></svg><div class="t" style="left:957.5px;top:719.10px;font-size:11.35px;line-height:11.35px;color:#ddd;font-weight:normal;font-family:'Liberation Mono',monospace;white-space:pre"><span style="color:#cf9ecd">ConvenienceInfo</span><span style="color:#d4d4d8">: </span><span style="color:#b0b0b4">List (1 item)</span></div><div style="left:1170px;top:501px;width:54px;height:38px;background:#ececec;border-radius:4px"></div><div class="t" style="left:1182px;top:513.92px;font-size:12.5px;line-height:12.5px;color:#2a2a2a;font-weight:normal;font-family:'Liberation Sans',sans-serif;transform:scaleX(0.8840);transform-origin:0 0;">'KWD'</div><div style="left:893px;top:616px;width:2px;height:16px;background:#3e3e42"></div><div style="left:897px;top:616px;width:2px;height:16px;background:#3e3e42"></div><svg style="position:absolute;left:95px;top:1020px;" width="14" height="14" viewBox="0 0 14 14"><rect x="4" y="1" width="9" height="10" stroke="#1d3f87" stroke-width="1.4" fill="none"/><path d="M1.5 4v8.5H10" stroke="#1d3f87" stroke-width="1.4" fill="none"/><path d="M6 4h5M6 6.5h5" stroke="#1d3f87" stroke-width="1"/></svg><div class="t" style="left:112px;top:1019.99px;font-size:13px;line-height:13px;color:#1d3f87;font-weight:normal;font-family:'Liberation Sans',sans-serif;transform:scaleX(0.9300);transform-origin:0 0;">Read docs</div><div style="left:180px;top:1025px;width:3px;height:3px;background:#1d3f87;border-radius:2px"></div><svg style="position:absolute;left:195px;top:1020px;" width="15" height="14" viewBox="0 0 15 14"><rect x="1" y="1.5" width="13" height="9" rx="1" stroke="#1d3f87" stroke-width="1.4" fill="none"/><path d="M6 4v3.5l3-1.8z" fill="#1d3f87"/><path d="M5 13h5" stroke="#1d3f87" stroke-width="1.4"/></svg><div class="t" style="left:212.6px;top:1019.99px;font-size:13px;line-height:13px;color:#1d3f87;font-weight:normal;font-family:'Liberation Sans',sans-serif;transform:scaleX(0.9748);transform-origin:0 0;">Watch tutorial</div><div style="left:500px;top:1025px;width:3px;height:3px;background:#1d3f87;border-radius:2px"></div><div class="t" style="left:713.3px;top:1019.99px;font-size:13px;line-height:13px;color:#1d3f87;font-weight:normal;font-family:'Liberation Sans',sans-serif;transform:scaleX(0.9614);transform-origin:0 0;">Showing 40 of 40 requests</div><div style="left:876px;top:1030px;width:3px;height:2px;background:#1d3f87"></div><div style="left:1091px;top:1025px;width:3px;height:3px;background:#1d3f87;border-radius:2px"></div><div class="t" style="left:1325px;top:1019.99px;font-size:13px;line-height:13px;color:#1d3f87;font-weight:normal;font-family:'Liberation Sans',sans-serif;transform:scaleX(0.9686);transform-origin:0 0;">x64 (64 bit) android</div><div style="left:1440px;top:37px;width:30px;height:30px;background:#5a9463;border-radius:6px;clip-path:inset(0 0 0 6px round 0 6px 6px 0)"></div><svg style="position:absolute;left:1447px;top:44px;" width="17" height="17" viewBox="0 0 17 17"><rect x="5" y="4.5" width="7" height="10" rx="3.5" stroke="#e8f0e8" stroke-width="1.4" fill="none"/><path d="M1 8h4M12 8h4M1 12h4M12 12h4M6 1.5l1.5 3M11 1.5l-1.5 3M5 7h7" stroke="#e8f0e8" stroke-width="1.3"/></svg><div style="left:1460px;top:57px;width:5px;height:5px;background:#22d43a;border-radius:3px"></div><div style="left:1474px;top:37px;width:30px;height:30px;background:#cf5050;border-radius:6px"></div><div style="left:1482px;top:45px;width:14px;height:14px;border:1.6px solid #f4e4e4;border-radius:2px"></div><svg style="position:absolute;left:1520px;top:44px;" width="6" height="16" viewBox="0 0 6 16"><circle cx="3" cy="2.5" r="1.4" fill="#dfe1e5"/><circle cx="3" cy="8" r="1.4" fill="#dfe1e5"/><circle cx="3" cy="13.5" r="1.4" fill="#dfe1e5"/></svg><svg style="position:absolute;left:1566px;top:42px;" width="20" height="20" viewBox="0 0 20 20"><rect x="4.5" y="4.5" width="8" height="10.5" rx="4" stroke="#dfe1e5" stroke-width="1.4" fill="none"/><path d="M1 8h3.5M13 8h3M1 12h3.5M6 1.5l1.5 3M11 1.5l-1.5 3" stroke="#dfe1e5" stroke-width="1.3"/><path d="M12 18l6-6M14 12h4v4" stroke="#dfe1e5" stroke-width="1.4" fill="none"/></svg><svg style="position:absolute;left:1606px;top:42px;" width="20" height="20" viewBox="0 0 20 20"><path d="M12 2H3v16h6" stroke="#8a8c90" stroke-width="2" fill="none"/><path d="M15 9l-5 5 3 3M15 13l-3 3 3 3" stroke="#3fb4f0" stroke-width="1.8" fill="none"/></svg><svg style="position:absolute;left:1646px;top:42px;" width="18" height="20" viewBox="0 0 18 20"><path d="M11 1L3 11h5l-2 8 8-11H9z" fill="#f2a51a"/></svg><svg style="position:absolute;left:1686px;top:42px;" width="20" height="20" viewBox="0 0 20 20"><circle cx="8.5" cy="8.5" r="6.5" stroke="#dfe1e5" stroke-width="1.6" fill="none"/><path d="M13.3 13.3l5 5" stroke="#dfe1e5" stroke-width="1.7"/></svg><svg style="position:absolute;left:1726px;top:42px;" width="20" height="20" viewBox="0 0 20 20"><circle cx="10" cy="10" r="2.6" stroke="#dfe1e5" stroke-width="1.4" fill="none"/><path d="M10 2l1.4 2.1 2.4-.7.4 2.5 2.4.8-1 2.3 1.5 2-2.2 1.3.1 2.5-2.5-.1L11.4 18 10 16l-1.4 2-1.1-2.3-2.5.1.1-2.5L2.9 12 4.4 10l-1-2.3 2.4-.8.4-2.5 2.4.7z" stroke="#dfe1e5" stroke-width="1.4" fill="none" stroke-linejoin="round"/></svg><div style="left:1737px;top:42px;width:8px;height:8px;background:#4d8dfb;border-radius:4px"></div><div style="left:1766px;top:42px;width:20px;height:20px;background:#0d9aa8;border-radius:10px"></div><div class="t" style="left:1771.2px;top:45.99px;font-size:13px;line-height:13px;color:#f0f0f0;font-weight:normal;font-family:'Liberation Sans',sans-serif;">C</div><div style="left:1816px;top:53px;width:8px;height:1.5px;background:#dfe1e5"></div><svg style="position:absolute;left:1853px;top:45px;" width="14" height="14" viewBox="0 0 14 14"><rect x="1.5" y="4" width="8" height="8" stroke="#dfe1e5" stroke-width="1.2" fill="none"/><path d="M4 4V1.5h8V10H9.5" stroke="#dfe1e5" stroke-width="1.2" fill="none"/></svg><svg style="position:absolute;left:1893px;top:45px;" width="14" height="14" viewBox="0 0 14 14"><path d="M1.5 1.5l11 11M12.5 1.5l-11 11" stroke="#dfe1e5" stroke-width="1.3"/></svg><div class="t" style="left:1451.5px;top:85.65px;font-size:14px;line-height:14px;color:#dfe1e5;font-weight:normal;font-family:'Liberation Sans',sans-serif;transform:scaleX(1.0681);transform-origin:0 0;">Pixel 9 Pro API 36.0</div><div style="left:1446px;top:94px;width:2px;height:4px;background:#3fb950;border-radius:1px"></div><svg style="position:absolute;left:1593px;top:88px;" width="10" height="10" viewBox="0 0 10 10"><path d="M1 1l8 8M9 1l-8 8" stroke="#8c8e92" stroke-width="1.1"/></svg><svg style="position:absolute;left:1617px;top:85px;" width="15" height="15" viewBox="0 0 15 15"><path d="M7.5 1v13M1 7.5h13" stroke="#dfe1e5" stroke-width="1.4"/></svg><svg style="position:absolute;left:1798px;top:85px;" width="16" height="16" viewBox="0 0 16 16"><path d="M7 2H2v12h12V9" stroke="#dfe1e5" stroke-width="1.3" fill="none"/><path d="M9 2h5v5M14 2L8 8" stroke="#dfe1e5" stroke-width="1.3" fill="none"/></svg><svg style="position:absolute;left:1829px;top:85px;" width="6" height="16" viewBox="0 0 6 16"><circle cx="3" cy="2.5" r="1.3" fill="#dfe1e5"/><circle cx="3" cy="8" r="1.3" fill="#dfe1e5"/><circle cx="3" cy="13.5" r="1.3" fill="#dfe1e5"/></svg><div style="left:1852px;top:92px;width:13px;height:1.5px;background:#dfe1e5"></div><svg style="position:absolute;left:1890px;top:82px;" width="20" height="20" viewBox="0 0 20 20"><path d="M5 15V9a5 5 0 0 1 10 0v6l1.5 1.5h-13zM8.5 18h3" stroke="#dfe1e5" stroke-width="1.4" fill="none"/></svg><div style="left:1904px;top:84px;width:7px;height:7px;background:#4d8dfb;border-radius:4px"></div><svg style="position:absolute;left:1890px;top:121px;" width="20" height="22" viewBox="0 0 20 22"><path d="M9 2H3v16h5" stroke="#dfe1e5" stroke-width="1.5" fill="none"/><rect x="9" y="12" width="9" height="6" rx="3" stroke="#dfe1e5" stroke-width="1.4" fill="none"/><path d="M13 8v4" stroke="#dfe1e5" stroke-width="1.3"/></svg><div style="left:1885px;top:157px;width:30px;height:30px;background:#43454a;border-radius:5px"></div><svg style="position:absolute;left:1890px;top:162px;" width="20" height="20" viewBox="0 0 20 20"><path d="M8 2H3v15h5" stroke="#dfe1e5" stroke-width="1.4" fill="none"/><rect x="8" y="9" width="10" height="6" stroke="#dfe1e5" stroke-width="1.4" fill="none"/><path d="M7 18h12" stroke="#dfe1e5" stroke-width="1.4"/></svg><div style="left:1906px;top:161px;width:8px;height:8px;background:#5fb865;border-radius:4px"></div><svg style="position:absolute;left:1891px;top:203px;" width="18" height="18" viewBox="0 0 18 18"><path d="M9 1Q10 8 17 9Q10 10 9 17Q8 10 1 9Q8 8 9 1z" fill="#dfe1e5"/></svg><svg style="position:absolute;left:1889px;top:243px;" width="22" height="22" viewBox="0 0 22 22"><rect x="2" y="5" width="15" height="8" rx="4" stroke="#dfe1e5" stroke-width="1.5" fill="none"/><path d="M6 9h8" stroke="#dfe1e5" stroke-width="1.5"/><path d="M19 12l-3 3 3 3" stroke="#4d8dfb" stroke-width="1.4" fill="none"/></svg><svg style="position:absolute;left:1889px;top:283px;" width="22" height="22" viewBox="0 0 22 22"><path d="M3 3l12 12M15 3L3 15" stroke="#dfe1e5" stroke-width="1.6"/><circle cx="4" cy="4" r="2" stroke="#dfe1e5" stroke-width="1.3" fill="none"/><path d="M19 12l-3 3 3 3" stroke="#4d8dfb" stroke-width="1.4" fill="none"/></svg><svg style="position:absolute;left:1889px;top:323px;" width="22" height="22" viewBox="0 0 22 22"><path d="M3 6h4V3.5a2 2 0 0 1 4 0V6h4v4h1a2 2 0 0 1 0 4h-1v4H3v-4h1a2 2 0 0 0 0-4H3z" stroke="#dfe1e5" stroke-width="1.4" fill="none"/><path d="M19 12l-3 3 3 3" stroke="#4d8dfb" stroke-width="1.4" fill="none"/></svg><svg style="position:absolute;left:1889px;top:363px;" width="22" height="22" viewBox="0 0 22 22"><path d="M3 17l1-4 9-9 3 3-9 9z" stroke="#dfe1e5" stroke-width="1.5" fill="none"/><path d="M19 12l-3 3 3 3" stroke="#4d8dfb" stroke-width="1.4" fill="none"/></svg><svg style="position:absolute;left:1889px;top:403px;" width="22" height="22" viewBox="0 0 22 22"><rect x="2" y="3" width="16" height="14" rx="1" stroke="#dfe1e5" stroke-width="1.4" fill="none"/><path d="M2 6h16" stroke="#dfe1e5" stroke-width="1.4"/><ellipse cx="10" cy="11" rx="5" ry="3" stroke="#dfe1e5" stroke-width="1.3" fill="none"/><circle cx="10" cy="11" r="1.3" fill="#dfe1e5"/><path d="M19 12l-3 3 3 3" stroke="#4d8dfb" stroke-width="1.4" fill="none"/></svg><svg style="position:absolute;left:1889px;top:443px;" width="22" height="22" viewBox="0 0 22 22"><path d="M2 6V2h4M14 2h4v4M18 14v4h-4M6 18H2v-4" stroke="#dfe1e5" stroke-width="1.4" fill="none"/><circle cx="9" cy="9" r="3.5" stroke="#dfe1e5" stroke-width="1.4" fill="none"/><path d="M11.5 11.5l3 3" stroke="#dfe1e5" stroke-width="1.4"/><path d="M19 12l-3 3 3 3" stroke="#4d8dfb" stroke-width="1.4" fill="none"/></svg><svg style="position:absolute;left:1455px;top:122px;" width="18" height="18" viewBox="0 0 18 18"><path d="M2 7h3l4-3.5v11L5 11H2z" stroke="#c9cbcf" stroke-width="1.3" fill="none"/><path d="M11 6.5q1.5 2.5 0 5M13.5 4.5q3 4.5 0 9" stroke="#c9cbcf" stroke-width="1.3" fill="none"/></svg><svg style="position:absolute;left:1480px;top:122px;" width="18" height="18" viewBox="0 0 18 18"><path d="M3 7h3l4-3.5v11L6 11H3z" stroke="#c9cbcf" stroke-width="1.3" fill="none"/><path d="M12 7q1.5 2 0 4" stroke="#c9cbcf" stroke-width="1.3" fill="none"/></svg><div style="left:1507px;top:122px;width:1px;height:18px;background:#43454a"></div><svg style="position:absolute;left:1515px;top:122px;" width="18" height="18" viewBox="0 0 18 18"><rect x="2" y="3" width="7" height="12" stroke="#c9cbcf" stroke-width="1.3" fill="none"/><path d="M12 5q4 3 0 9M11 3l2 2-2 2" stroke="#4d8dfb" stroke-width="1.3" fill="none"/></svg><svg style="position:absolute;left:1541px;top:122px;" width="18" height="18" viewBox="0 0 18 18"><rect x="9" y="3" width="7" height="12" stroke="#c9cbcf" stroke-width="1.3" fill="none"/><path d="M6 5q-4 3 0 9M7 3L5 5l2 2" stroke="#4d8dfb" stroke-width="1.3" fill="none"/></svg><div style="left:1566px;top:122px;width:1px;height:18px;background:#43454a"></div><svg style="position:absolute;left:1574px;top:122px;" width="18" height="18" viewBox="0 0 18 18"><path d="M13 3L5 9l8 6z" stroke="#c9cbcf" stroke-width="1.3" fill="none"/></svg><svg style="position:absolute;left:1600px;top:122px;" width="18" height="18" viewBox="0 0 18 18"><circle cx="9" cy="9" r="6" stroke="#c9cbcf" stroke-width="1.3" fill="none"/></svg><svg style="position:absolute;left:1626px;top:122px;" width="18" height="18" viewBox="0 0 18 18"><rect x="4" y="4" width="10" height="10" stroke="#c9cbcf" stroke-width="1.3" fill="none"/></svg><div style="left:1651px;top:122px;width:1px;height:18px;background:#43454a"></div><svg style="position:absolute;left:1660px;top:122px;" width="18" height="18" viewBox="0 0 18 18"><path d="M9 2H3v14h4" stroke="#c9cbcf" stroke-width="1.3" fill="none"/><circle cx="12" cy="13" r="3" stroke="#c9cbcf" stroke-width="1.3" fill="none"/><path d="M6 4h2" stroke="#c9cbcf" stroke-width="1.3" fill="none"/></svg><svg style="position:absolute;left:1685px;top:122px;" width="18" height="18" viewBox="0 0 18 18"><rect x="1" y="3" width="14" height="8" stroke="#c9cbcf" stroke-width="1.3" fill="none"/><path d="M4 6h8M4 8h8" stroke="#c9cbcf" stroke-width="1" stroke-dasharray="1 1"/><rect x="11" y="10" width="5" height="7" rx="2.5" stroke="#c9cbcf" stroke-width="1.3" fill="none"/></svg><div style="left:1711px;top:122px;width:1px;height:18px;background:#43454a"></div><svg style="position:absolute;left:1718px;top:122px;" width="18" height="18" viewBox="0 0 18 18"><path d="M2 6h3l2-2h4l2 2h3v9H2z" stroke="#c9cbcf" stroke-width="1.3" fill="none"/><circle cx="9" cy="10" r="3" stroke="#c9cbcf" stroke-width="1.3" fill="none"/></svg><svg style="position:absolute;left:1744px;top:122px;" width="18" height="18" viewBox="0 0 18 18"><rect x="1" y="4" width="11" height="10" stroke="#c9cbcf" stroke-width="1.3" fill="none"/><path d="M12 8l5-3v8l-5-3" stroke="#c9cbcf" stroke-width="1.3" fill="none"/></svg><div style="left:1769px;top:122px;width:1px;height:18px;background:#43454a"></div><svg style="position:absolute;left:1777px;top:122px;" width="18" height="18" viewBox="0 0 18 18"><path d="M9 2v10M5 6l4-4 4 4M2 11v5h14v-5" stroke="#c9cbcf" stroke-width="1.3" fill="none"/></svg><svg style="position:absolute;left:1803px;top:122px;" width="18" height="18" viewBox="0 0 18 18"><path d="M9 2v10M5 8l4 4 4-4M2 11v5h14v-5" stroke="#c9cbcf" stroke-width="1.3" fill="none"/></svg><div style="left:1828px;top:122px;width:1px;height:18px;background:#43454a"></div><svg style="position:absolute;left:1850px;top:122px;" width="18" height="18" viewBox="0 0 18 18"><rect x="1" y="3" width="12" height="9" stroke="#c9cbcf" stroke-width="1.3" fill="none"/><path d="M3 1h12v9" stroke="#c9cbcf" stroke-width="1.3" fill="none"/><circle cx="13" cy="13" r="2.5" stroke="#c9cbcf" stroke-width="1.3" fill="none"/><path d="M15 15l2 2" stroke="#c9cbcf" stroke-width="1.3" fill="none"/></svg><svg style="position:absolute;left:1462px;top:147px;" width="6" height="16" viewBox="0 0 6 16"><circle cx="3" cy="2.5" r="1.3" fill="#c9cbcf"/><circle cx="3" cy="8" r="1.3" fill="#c9cbcf"/><circle cx="3" cy="13.5" r="1.3" fill="#c9cbcf"/></svg><div style="left:1835px;top:819px;width:26px;height:106px;border:1px solid #3c3f44;border-radius:4px"></div><div style="left:1836px;top:886px;width:1px;height:0px;"></div><svg style="position:absolute;left:1840px;top:824px;" width="16" height="16" viewBox="0 0 16 16"><path d="M8 2v12M2 8h12" stroke="#c9cbcf" stroke-width="1.3"/></svg><div style="left:1842px;top:858px;width:12px;height:1px;background:#5a5d62"></div><div class="t" style="left:1841.5px;top:880.11px;font-size:10.5px;line-height:10.5px;color:#c9cbcf;font-weight:bold;font-family:'Liberation Sans',sans-serif;transform:scaleX(0.8566);transform-origin:0 0;">1:1</div><div style="left:1841px;top:905px;width:13px;height:11px;border:1px solid #4a4d52;border-radius:2px"></div><svg style="position:absolute;left:1861px;top:998px;" width="14" height="14" viewBox="0 0 14 14"><rect x="1" y="1" width="12" height="12" rx="2" stroke="#dfe1e5" stroke-width="1.3" fill="none"/><path d="M6 1v12M6 7h7" stroke="#dfe1e5" stroke-width="1.3"/></svg><div style="left:1447px;top:1025px;width:431px;height:12px;background:#3b3d41"></div><div style="left:1446px;top:1044px;width:434px;height:5px;background:#1e1f22"></div><div style="left:1447px;top:1024px;width:431px;height:2px;background:#c75450"></div><div style="left:1876px;top:1024px;width:2px;height:13px;background:#c75450"></div><div style="left:1466px;top:173px;width:363px;height:774px;background:#000;border-radius:58px;border:3px solid #b9babc;box-shadow:inset 0 0 0 1px #555,inset 0 0 0 2px #9a9b9d"></div><div style="left:1828px;top:395px;width:3px;height:80px;background:#55575b;border-radius:1px"></div><div style="left:1828px;top:500px;width:3px;height:90px;background:#55575b;border-radius:1px"></div><div style="left:1482.5px;top:189px;width:331px;height:742px;border-radius:46px;overflow:hidden;background:#fff"><div style="left:0.0px;top:0px;width:331px;height:41px;background:#e8e9e8"></div><div class="t" style="left:22.4px;top:14.69px;font-size:11px;line-height:11px;color:#5a5a5a;font-weight:normal;font-family:'Liberation Sans',sans-serif;transform:scaleX(0.9263);transform-origin:0 0;">12:38</div><svg style="position:absolute;left:284px;top:14px;" width="26" height="12" viewBox="0 0 26 12"><path d="M1 3Q6 -1 11 3L6 10z" fill="#666"/><rect x="17" y="1" width="5" height="10" rx="0.8" fill="#666"/></svg><div style="left:0.0px;top:41px;width:331px;height:43px;background:linear-gradient(90deg,#0f3327 0%,#0b261e 45%,#050a08 100%)"></div><div style="left:0.0px;top:41px;width:1px;height:660px;background:#c9de2a"></div><div style="left:330.0px;top:41px;width:1px;height:660px;background:#c9de2a"></div><svg style="position:absolute;left:12px;top:55px;" width="16" height="16" viewBox="0 0 16 16"><path d="M15 8H2M8 2L2 8l6 6" stroke="#fff" stroke-width="1.8" fill="none"/></svg><div class="t" style="left:43.8px;top:57.42px;font-size:12.5px;line-height:12.5px;color:#fff;font-weight:bold;font-family:'Liberation Sans',sans-serif;transform:scaleX(0.9824);transform-origin:0 0;">Payment Confirmation</div><div style="left:11.9px;top:100.2px;width:307px;height:83px;border:1px solid #dcdcdc;border-radius:9px"></div><div class="t" style="left:27.1px;top:117.02px;font-size:12.5px;line-height:12.5px;color:#111;font-weight:bold;font-family:'Liberation Sans',sans-serif;transform:scaleX(0.9409);transform-origin:0 0;">Coupon Discount</div><div style="left:26.9px;top:139.2px;width:212px;height:36.6px;border:1px solid #d6d6d6;border-radius:5px 0 0 5px;box-shadow:0 1px 1px rgba(0,0,0,.08)"></div><div class="t" style="left:39.5px;top:151.11px;font-size:10.5px;line-height:10.5px;color:#c4c4c4;font-weight:normal;font-family:'Liberation Sans',sans-serif;transform:scaleX(1.0666);transform-origin:0 0;">Enter Coupon Code</div><div style="left:234.7px;top:139.2px;width:70px;height:36.6px;background:#0e2e25;border-radius:0 8px 8px 0"></div><div class="t" style="left:256.8px;top:153.53px;font-size:10px;line-height:10px;color:#fff;font-weight:bold;font-family:'Liberation Sans',sans-serif;transform:scaleX(0.9216);transform-origin:0 0;">Apply</div><div style="left:11.9px;top:198.6px;width:307px;height:143px;border:1px solid #dcdcdc;border-radius:9px"></div><div class="t" style="left:22.8px;top:212.04px;font-size:12px;line-height:12px;color:#111;font-weight:bold;font-family:'Liberation Sans',sans-serif;transform:scaleX(0.9835);transform-origin:0 0;">Fare Summary</div><div class="t" style="left:22.5px;top:239.68px;font-size:9px;line-height:9px;color:#444;font-weight:normal;font-family:'Liberation Sans',sans-serif;transform:scaleX(1.0996);transform-origin:0 0;">Hotel Price</div><div class="t" style="left:182.5px;top:239.68px;font-size:9px;line-height:9px;color:#444;font-weight:normal;font-family:'Liberation Sans',sans-serif;transform:scaleX(1.0583);transform-origin:0 0;">KWD 28.734</div><div class="t" style="left:22.5px;top:256.88px;font-size:9px;line-height:9px;color:#444;font-weight:normal;font-family:'Liberation Sans',sans-serif;transform:scaleX(1.0683);transform-origin:0 0;">Service Fee</div><div class="t" style="left:182.5px;top:256.88px;font-size:9px;line-height:9px;color:#444;font-weight:normal;font-family:'Liberation Sans',sans-serif;transform:scaleX(1.0700);transform-origin:0 0;">KWD 15.000</div><div style="left:22.5px;top:281px;width:286px;height:1px;background:#e2e2e2"></div><div class="t" style="left:30.5px;top:302.81px;font-size:10.5px;line-height:10.5px;color:#1a2340;font-weight:bold;font-family:'Liberation Sans',sans-serif;transform:scaleX(1.0986);transform-origin:0 0;">Total</div><svg style="position:absolute;left:166px;top:300px;" width="16" height="16" viewBox="0 0 16 16"><circle cx="8" cy="8" r="6.8" stroke="#333" stroke-width="1.1" fill="none"/><path d="M8 7v4.5" stroke="#333" stroke-width="1.2"/><circle cx="8" cy="4.8" r=".8" fill="#333"/></svg><div class="t" style="left:189.4px;top:293.94px;font-size:12px;line-height:12px;color:#1a2340;font-weight:bold;font-family:'Liberation Sans',sans-serif;transform:scaleX(1.0161);transform-origin:0 0;">KWD 43.734</div><div class="t" style="left:189.4px;top:311.11px;font-size:10.5px;line-height:10.5px;color:#555;font-weight:normal;font-family:'Liberation Sans',sans-serif;transform:scaleX(1.0473);transform-origin:0 0;">Price for 1 Rooms</div><div style="left:11.9px;top:354.1px;width:307px;height:101.6px;border:1px solid #dcdcdc;border-radius:11px"></div><div class="t" style="left:24.7px;top:372.42px;font-size:12.5px;line-height:12.5px;color:#222;font-weight:bold;font-family:'Liberation Sans',sans-serif;transform:scaleX(0.9576);transform-origin:0 0;">Choose Payment Method</div><div style="left:24.7px;top:394.3px;width:281.8px;height:45.1px;border:1px solid #dcdcdc;border-radius:8px"></div><svg style="position:absolute;left:32px;top:410px;" width="13" height="13" viewBox="0 0 13 13"><circle cx="6.5" cy="6.5" r="6.2" fill="#13a517"/><path d="M3.5 6.8l2 2 4-4" stroke="#fff" stroke-width="1.6" fill="none"/></svg><div style="left:69.3px;top:401px;width:45.5px;height:30.7px;background:#0f6cc1"></div><div style="left:70.5px;top:402px;width:43px;height:6px;background:#0f6cc1"></div><svg style="position:absolute;left:68px;top:401px;" width="47" height="31" viewBox="0 0 47 31"><path d="M10 3h26M14 5h4M26 5h6" stroke="#fff" stroke-width="1.5"/><path d="M13 9h6v3.5l4-3.5h8l-6 5 6 6h-8l-4-3.5V20h-6z" fill="#f5e11a"/><path d="M6 26h6M17 26h6M28 26h5M37 26h4" stroke="#fff" stroke-width="3"/></svg><div style="left:22.8px;top:477.4px;width:15px;height:15.2px;border:1px solid #c4c4c4;border-radius:3px"></div><div class="t" style="left:46.9px;top:477.88px;font-size:9px;line-height:9px;color:#262626;font-weight:normal;font-family:'Liberation Sans',sans-serif;transform:scaleX(1.0629);transform-origin:0 0;">By completing this booking I agree that I have read and</div><div class="t" style="left:46.9px;top:490.48px;font-size:9px;line-height:9px;color:#262626;font-weight:normal;font-family:'Liberation Sans',sans-serif;transform:scaleX(1.0610);transform-origin:0 0;">accept the Rules and Restrictions. Terms of Use and_the</div><div class="t" style="left:46.9px;top:503.18px;font-size:9px;line-height:9px;color:#262626;font-weight:normal;font-family:'Liberation Sans',sans-serif;transform:scaleX(1.0528);transform-origin:0 0;">Privacy Policy.</div><svg style="position:absolute;left:56px;top:538px;" width="17" height="19" viewBox="0 0 17 19"><path d="M8.5 1L15 4v5q0 6-6.5 9Q2 15 2 9V4z" stroke="#9a9a9a" stroke-width="1" fill="none"/><circle cx="8.5" cy="9.5" r="3.5" stroke="#9a9a9a" stroke-width="1" fill="none"/></svg><svg style="position:absolute;left:154px;top:530px;" width="22" height="20" viewBox="0 0 22 20"><path d="M2 6h5v12H2zM7 8l5-6 2 2-2 4h7v4l-3 5H7" stroke="#9a9a9a" stroke-width="1" fill="none"/></svg><svg style="position:absolute;left:258px;top:537px;" width="18" height="20" viewBox="0 0 18 20"><path d="M3 2h9v14H3zM6 6h6l4 4v8H9l-3-4z" stroke="#9a9a9a" stroke-width="1" fill="none"/></svg><div class="t" style="left:33.7px;top:563.83px;font-size:10px;line-height:10px;color:#111;font-weight:bold;font-family:'Liberation Sans',sans-serif;transform:scaleX(0.9723);transform-origin:0 0;">100% Secure</div><div class="t" style="left:22.3px;top:577.86px;font-size:9.5px;line-height:9.5px;color:#262626;font-weight:normal;font-family:'Liberation Sans',sans-serif;transform:scaleX(1.0138);transform-origin:0 0;">We use 128-bit SSI</div><div class="t" style="left:40.7px;top:591.16px;font-size:9.5px;line-height:9.5px;color:#262626;font-weight:normal;font-family:'Liberation Sans',sans-serif;transform:scaleX(1.0495);transform-origin:0 0;">encryption</div><div class="t" style="left:130.8px;top:557.23px;font-size:10px;line-height:10px;color:#111;font-weight:bold;font-family:'Liberation Sans',sans-serif;transform:scaleX(0.9652);transform-origin:0 0;">Trust Worlwide</div><div class="t" style="left:124.7px;top:570.96px;font-size:9.5px;line-height:9.5px;color:#262626;font-weight:normal;font-family:'Liberation Sans',sans-serif;transform:scaleX(1.0413);transform-origin:0 0;">We do not store or</div><div class="t" style="left:132.9px;top:584.16px;font-size:9.5px;line-height:9.5px;color:#262626;font-weight:normal;font-family:'Liberation Sans',sans-serif;transform:scaleX(1.0580);transform-origin:0 0;">view your card</div><div class="t" style="left:155.8px;top:597.36px;font-size:9.5px;line-height:9.5px;color:#262626;font-weight:normal;font-family:'Liberation Sans',sans-serif;transform:scaleX(1.0276);transform-origin:0 0;">data</div><div class="t" style="left:235.2px;top:563.83px;font-size:10px;line-height:10px;color:#111;font-weight:bold;font-family:'Liberation Sans',sans-serif;transform:scaleX(0.9516);transform-origin:0 0;">Easy payment</div><div class="t" style="left:224.2px;top:577.86px;font-size:9.5px;line-height:9.5px;color:#262626;font-weight:normal;font-family:'Liberation Sans',sans-serif;transform:scaleX(1.0265);transform-origin:0 0;">Knet. Visa &amp; master</div><div class="t" style="left:255.4px;top:591.16px;font-size:9.5px;line-height:9.5px;color:#262626;font-weight:normal;font-family:'Liberation Sans',sans-serif;transform:scaleX(1.0159);transform-origin:0 0;">cards</div><div style="left:0.0px;top:668px;width:331px;height:2px;background:#e4e4e4"></div><div style="left:18.5px;top:677px;width:293px;height:39px;background:#12b000;border-radius:10px"></div><div class="t" style="left:139.4px;top:690.92px;font-size:12.5px;line-height:12.5px;color:#fff;font-weight:bold;font-family:'Liberation Sans',sans-serif;transform:scaleX(1.0077);transform-origin:0 0;">Pay Now</div><div style="left:123.5px;top:732.5px;width:84px;height:3px;background:#555;border-radius:2px"></div></div><div style="left:1635px;top:203px;width:26px;height:26px;background:#050505;border-radius:13px"></div><div style="left:1645px;top:213px;width:6px;height:6px;background:#2a2350;border-radius:3px"></div><div style="left:71px;top:78px;width:11px;height:30px;background:#3c3f44;border-radius:6px 0 0 6px"></div><div style="left:77px;top:86px;width:5px;height:14px;border:1.5px solid #c9cbcf;border-right:none"></div><div style="left:78px;top:126px;width:4px;height:1.5px;background:#c9cbcf"></div><div style="left:79px;top:179px;width:3px;height:3px;background:#c9cbcf;border-radius:2px"></div><div style="left:71px;top:812px;width:11px;height:30px;background:#3c3f44;border-radius:6px 0 0 6px"></div><svg style="position:absolute;left:75px;top:820px;" width="8" height="14" viewBox="0 0 8 14"><path d="M1 3l4 4-4 4M4 3l4 4" stroke="#c9cbcf" stroke-width="1.2" fill="none"/></svg><svg style="position:absolute;left:75px;top:860px;" width="8" height="14" viewBox="0 0 8 14"><path d="M7 2L2 7l5 5" stroke="#c9cbcf" stroke-width="1.4" fill="none"/></svg><svg style="position:absolute;left:76px;top:903px;" width="6" height="12" viewBox="0 0 6 12"><path d="M0 2h6M0 6h6M0 10h6" stroke="#c9cbcf" stroke-width="1.2"/></svg><svg style="position:absolute;left:75px;top:940px;" width="8" height="16" viewBox="0 0 8 16"><path d="M7 2A6 6 0 0 0 7 14" stroke="#c9cbcf" stroke-width="1.4" fill="none"/></svg><svg style="position:absolute;left:75px;top:980px;" width="8" height="16" viewBox="0 0 8 16"><path d="M8 1H2v14h6" stroke="#c9cbcf" stroke-width="1.4" fill="none"/></svg><svg style="position:absolute;left:74px;top:780px;" width="9" height="16" viewBox="0 0 9 16"><path d="M8 3Q3 6 4 11" stroke="#aaa" stroke-width="1.4" fill="none"/><circle cx="5" cy="12" r="3" fill="#e2b340"/></svg><svg style="position:absolute;left:74px;top:1018px;" width="9" height="16" viewBox="0 0 9 16"><circle cx="6" cy="5" r="3" stroke="#c9cbcf" stroke-width="1.3" fill="none"/><path d="M5 8v6" stroke="#c9cbcf" stroke-width="1.3"/></svg><div style="left:66px;top:1040px;width:40px;height:9px;background:#2b2d30"></div><div style="left:106px;top:1040px;width:1340px;height:9px;background:#1e1f22"></div><div class="t" style="left:156px;top:1046.34px;font-size:12px;line-height:12px;color:#8c8e92;font-weight:normal;font-family:'Liberation Sans',sans-serif;clip-path:inset(0 0 8.5px 0)">///Widget_?_?mqcl.Dimensions (L4743)     ...  SS   ...  ...  .  .  ..  ..</div><div style="left:80.5px;top:1060px;width:8px;height:8px;border:1.3px solid #4d8dfb;border-radius:2px"></div><div class="t" style="left:92.6px;top:1057.15px;font-size:14px;line-height:14px;color:#a9abb0;font-weight:normal;font-family:'Liberation Sans',sans-serif;transform:scaleX(1.0228);transform-origin:0 0;">Safargo_Flutter</div><svg style="position:absolute;left:200px;top:1058px;" width="8" height="12" viewBox="0 0 8 12"><path d="M2 2l4 4-4 4" stroke="#8c8e92" stroke-width="1.3" fill="none"/></svg><div class="t" style="left:216.5px;top:1057.15px;font-size:14px;line-height:14px;color:#a9abb0;font-weight:normal;font-family:'Liberation Sans',sans-serif;transform:scaleX(0.9638);transform-origin:0 0;">lib</div><svg style="position:absolute;left:239px;top:1058px;" width="8" height="12" viewBox="0 0 8 12"><path d="M2 2l4 4-4 4" stroke="#8c8e92" stroke-width="1.3" fill="none"/></svg><div class="t" style="left:255.4px;top:1057.15px;font-size:14px;line-height:14px;color:#a9abb0;font-weight:normal;font-family:'Liberation Sans',sans-serif;transform:scaleX(1.0459);transform-origin:0 0;">helper_widgets</div><svg style="position:absolute;left:362px;top:1058px;" width="8" height="12" viewBox="0 0 8 12"><path d="M2 2l4 4-4 4" stroke="#8c8e92" stroke-width="1.3" fill="none"/></svg><svg style="position:absolute;left:379px;top:1057px;" width="14" height="14" viewBox="0 0 14 14"><path d="M4 1L10 3.5L13 10L9 13L3 11L1 4z" fill="#29b6f6"/><path d="M4 1L10 3.5L13 10L7 7z" fill="#0175c2"/></svg><div class="t" style="left:398px;top:1057.15px;font-size:14px;line-height:14px;color:#a9abb0;font-weight:normal;font-family:'Liberation Sans',sans-serif;transform:scaleX(1.0493);transform-origin:0 0;">select_country_dialog.dart</div><div class="t" style="left:1631px;top:1057.15px;font-size:14px;line-height:14px;color:#a9abb0;font-weight:normal;font-family:'Liberation Sans',sans-serif;transform:scaleX(1.0704);transform-origin:0 0;">15:56</div><div class="t" style="left:1685px;top:1057.15px;font-size:14px;line-height:14px;color:#a9abb0;font-weight:normal;font-family:'Liberation Sans',sans-serif;transform:scaleX(0.9181);transform-origin:0 0;">LF</div><div class="t" style="left:1717.5px;top:1057.15px;font-size:14px;line-height:14px;color:#a9abb0;font-weight:normal;font-family:'Liberation Sans',sans-serif;transform:scaleX(1.0337);transform-origin:0 0;">UTF-8</div><svg style="position:absolute;left:1774px;top:1056px;" width="18" height="18" viewBox="0 0 18 18"><path d="M8 2Q9 8 15 9Q9 10 8 16Q7 10 1 9Q7 8 8 2z" fill="#dfe1e5"/><circle cx="13" cy="5" r="3" stroke="#dfe1e5" stroke-width="1.2" fill="#2b2d30"/></svg><div class="t" style="left:1811.5px;top:1057.15px;font-size:14px;line-height:14px;color:#a9abb0;font-weight:normal;font-family:'Liberation Sans',sans-serif;transform:scaleX(1.0440);transform-origin:0 0;">2 spaces</div><svg style="position:absolute;left:1887px;top:1056px;" width="16" height="16" viewBox="0 0 16 16"><rect x="2" y="7" width="10" height="8" rx="1" stroke="#dfe1e5" stroke-width="1.3" fill="none"/><path d="M9 7V4.5a3 3 0 0 1 6 0V6" stroke="#dfe1e5" stroke-width="1.3" fill="none"/></svg><svg style="position:absolute;left:9px;top:36px;" width="48" height="42" viewBox="0 0 48 42"><defs><radialGradient id="tb" cx="50%" cy="55%" r="55%"><stop offset="0" stop-color="#6fb0ff"/><stop offset="1" stop-color="#1c5fd0"/></radialGradient></defs><ellipse cx="24" cy="21" rx="23.5" ry="20.5" fill="url(#tb)"/><path d="M5 8Q2 20 10 30Q20 40 36 34Q26 36 18 30Q10 22 12 10z" fill="#0f46b0"/><ellipse cx="23" cy="17" rx="12" ry="10" fill="#dfe6f2"/><path d="M12 14l11 7 11-7" stroke="#9aa7bd" stroke-width="2" fill="none"/><path d="M30 6Q38 6 42 12" stroke="#8a5fd0" stroke-width="3" fill="none"/></svg><svg style="position:absolute;left:11px;top:96px;" width="45" height="42" viewBox="0 0 45 42"><path d="M2 8Q2 4 6 4H17l4 3H40Q44 7 44 11V20H2z" fill="#c3306b"/><path d="M20 7H40Q44 7 44 11V20H20z" fill="#e95420" opacity=".85"/><rect x="1" y="10" width="44" height="31" rx="5" fill="#bdbdbd"/><rect x="1" y="10" width="44" height="15" rx="5" fill="#c8c8c8"/><rect x="17" y="16" width="12" height="3" rx="1.5" fill="#f4f4f4"/></svg><svg style="position:absolute;left:15px;top:158px;" width="37" height="46" viewBox="0 0 37 46"><path d="M4 1H28L36 9V41Q36 45 32 45H4Q0 45 0 41V5Q0 1 4 1z" fill="#2b8fd0"/><path d="M18 1H28L36 9V41Q36 45 32 45H18z" fill="#47a6dc"/><path d="M28 1L36 9H28z" fill="#1a6fae"/><path d="M7 14h8M7 18h8M7 22h8M7 27h23M7 31h23M7 35h17" stroke="#fff" stroke-width="2.2"/><rect x="18" y="12" width="12" height="10" rx="1.5" fill="#fff"/><path d="M19 21l4-5 3 3 3-4v6z" fill="#47a6dc"/></svg><svg style="position:absolute;left:12px;top:222px;" width="42" height="48" viewBox="0 0 42 48"><path d="M3 10H39V42Q39 46 35 46H7Q3 46 3 42z" fill="#f07428"/><path d="M3 10H39V20H3z" fill="#f38a3c"/><path d="M13 10V5Q13 0 21 0Q29 0 29 5V10" stroke="#fff" stroke-width="2.5" fill="none"/><path d="M11 40L21 16L31 40M14 33H28" stroke="#fff" stroke-width="3.5" fill="none"/></svg><svg style="position:absolute;left:11px;top:286px;" width="45" height="45" viewBox="0 0 45 45"><path d="M22.5 1l4 2.5 4.7-.5 2.6 3.9 4.5 1.6.4 4.7 3.4 3.3-1.5 4.5 1.5 4.5-3.4 3.3-.4 4.7-4.5 1.6-2.6 3.9-4.7-.5-4 2.5-4-2.5-4.7.5-2.6-3.9-4.5-1.6-.4-4.7L1.3 28l1.5-4.5L1.3 19l3.4-3.3.4-4.7 4.5-1.6 2.6-3.9 4.7.5z" fill="#fafafa"/><path d="M22.5 11L12 36M22.5 11L33 36M15 28h15" stroke="#3a7ee8" stroke-width="3.4" fill="none"/><circle cx="22.5" cy="11" r="3.2" fill="#fff" stroke="#222" stroke-width="2"/><circle cx="35" cy="22" r="3" fill="#3ddc84"/></svg><div style="left:5px;top:307px;width:5px;height:5px;background:#e95420;border-radius:3px"></div><div style="left:3px;top:343px;width:60px;height:60px;background:rgba(255,255,255,0.14);border-radius:10px"></div><svg style="position:absolute;left:9px;top:349px;" width="48" height="48" viewBox="0 0 48 48"><circle cx="24" cy="24" r="23.5" fill="#e33b2e"/><path d="M24 24L3.6 12.2A23.5 23.5 0 0 0 12.25 44.4z" fill="#1e8e3e"/><path d="M24 24L12.25 44.4A23.5 23.5 0 0 0 47.5 24H24z" fill="#fbbc04"/><path d="M24 24L47.5 24A23.5 23.5 0 0 0 44.4 12.2z" fill="#fbbc04"/><path d="M24 24L44.4 12.2H24z" fill="#e33b2e"/><circle cx="24" cy="24" r="11" fill="#fff"/><circle cx="24" cy="24" r="8.6" fill="#1a73e8"/></svg><div style="left:5px;top:371px;width:5px;height:5px;background:#e95420;border-radius:3px"></div><svg style="position:absolute;left:12px;top:415px;" width="43" height="43" viewBox="0 0 43 43"><circle cx="21.5" cy="21.5" r="21" fill="#fafafa"/><g stroke-linecap="round" stroke-width="5"><path d="M17 9v9" stroke="#36c5f0"/><path d="M9 17h9" stroke="#36c5f0"/><path d="M26 9v9" stroke="#2eb67d"/><path d="M34 17h-8" stroke="#2eb67d"/><path d="M26 34v-9" stroke="#ecb22e"/><path d="M34 26h-8" stroke="#ecb22e"/><path d="M17 34v-9" stroke="#e01e5a"/><path d="M9 26h8" stroke="#e01e5a"/></g></svg><div style="left:38px;top:410px;width:24px;height:24px;background:#0b6b1c;border-radius:12px;border:1.5px solid #153a1a"></div><div class="t" style="left:45.5px;top:416.15px;font-size:14px;line-height:14px;color:#f4f4f4;font-weight:normal;font-family:'Liberation Sans',sans-serif;transform:scaleX(1.0274);transform-origin:0 0;">3</div><div style="left:5px;top:435px;width:5px;height:5px;background:#e95420;border-radius:3px"></div><svg style="position:absolute;left:14px;top:477px;" width="44" height="48" viewBox="0 0 44 48"><rect x="1" y="3" width="36" height="44" rx="4" fill="#f2f2f2"/><path d="M1 7Q1 3 5 3H33Q37 3 37 7V10H1z" fill="#3e7fd8"/><path d="M6 16h26M6 21h26M6 26h20M6 31h16M6 41h26" stroke="#c4c4c4" stroke-width="1.6"/><path d="M40 6L22 34l-3 6 6-3L43 9z" fill="#f0b43c"/><path d="M40 6l3 3 2-2-3-3z" fill="#e06666"/><path d="M19 40l3-6 3 3z" fill="#555"/></svg><svg style="position:absolute;left:10px;top:542px;" width="46" height="46" viewBox="0 0 46 46"><defs><linearGradient id="hp" x1="0" y1="0" x2="0" y2="1"><stop offset="0" stop-color="#2f7fde"/><stop offset=".5" stop-color="#2f7fde"/><stop offset=".5" stop-color="#4a9be8"/><stop offset="1" stop-color="#4a9be8"/></linearGradient></defs><circle cx="23" cy="23" r="22.5" fill="url(#hp)"/><path d="M15.5 16.5Q16 9 23 9Q30 9 30 16Q30 20 26 22.5Q23.5 24 23.5 28" stroke="#fff" stroke-width="4" fill="none"/><circle cx="23.5" cy="35" r="2.8" fill="#fff"/></svg><svg style="position:absolute;left:9px;top:605px;" width="48" height="48" viewBox="0 0 48 48"><path d="M24 1L46 20V40L40 47H21L1 27L5 19z" fill="#41c4fb"/><path d="M24 1L46 20V40L12 16L5 19z" fill="#0b69b5"/><path d="M12 16L46 40V20L24 1L5 19z" fill="#1689d6" opacity=".5"/><path d="M5 19L21 47L1 27z" fill="#0a5ea6" opacity=".5"/></svg><svg style="position:absolute;left:11px;top:671px;" width="44" height="44" viewBox="0 0 44 44"><path d="M31 4L5 28" stroke="#2aa0ef" stroke-width="7" stroke-linecap="round"/><path d="M31 40L5 16" stroke="#1a86d8" stroke-width="7" stroke-linecap="round"/><path d="M30 2L42 7V37L30 42z" fill="#1f9cf0"/><path d="M36 4.5L42 7V37L36 39.5z" fill="#0f7fd0"/></svg><svg style="position:absolute;left:10px;top:737px;" width="46" height="40" viewBox="0 0 46 40"><rect x="1" y="1" width="44" height="38" rx="5" fill="#e6e4dc"/><rect x="1" y="27" width="44" height="12" rx="3" fill="#bbb7a8"/><circle cx="33" cy="10" r="4.5" fill="#fff"/><circle cx="20" cy="16" r="10" stroke="#333" stroke-width="2.5" fill="rgba(255,255,255,.6)"/><path d="M27 23l8 8" stroke="#333" stroke-width="3.5"/></svg><svg style="position:absolute;left:10px;top:797px;" width="46" height="46" viewBox="0 0 46 46"><path d="M23 1L45 23L23 45L1 23z" fill="#e84e2c" transform="rotate(0)"/><path d="M22 8v10M22 18l10 10M22 18v12" stroke="#222" stroke-width="3"/><circle cx="22" cy="8" r="3" fill="#222"/><circle cx="32" cy="29" r="3.5" fill="#222"/><circle cx="22" cy="31" r="3" fill="#222"/><text x="9" y="32" font-size="9" fill="#fff" font-family="Liberation Sans" transform="rotate(40 14 28)">cola</text></svg><div style="left:9px;top:854px;width:48px;height:1px;background:#5a4e48"></div><svg style="position:absolute;left:15px;top:866px;" width="37" height="45" viewBox="0 0 37 45"><rect x="0" y="0" width="37" height="45" rx="6" fill="#d2d2d2"/><rect x="0" y="0" width="37" height="22" rx="6" fill="#dedede"/><circle cx="18.5" cy="25" r="12" stroke="#9a9a9a" stroke-width="2" fill="none" stroke-dasharray="60 16"/><circle cx="18.5" cy="25" r="3" stroke="#9a9a9a" stroke-width="2" fill="none"/></svg><svg style="position:absolute;left:15px;top:930px;" width="37" height="45" viewBox="0 0 37 45"><rect x="0" y="0" width="37" height="45" rx="6" fill="#d2d2d2"/><rect x="0" y="0" width="37" height="22" rx="6" fill="#dedede"/><circle cx="18.5" cy="25" r="12" stroke="#9a9a9a" stroke-width="2" fill="none" stroke-dasharray="60 16"/><circle cx="18.5" cy="25" r="3" stroke="#9a9a9a" stroke-width="2" fill="none"/></svg><svg style="position:absolute;left:15px;top:994px;" width="37" height="18" viewBox="0 0 37 18"><path d="M4 2H33L37 10V18H0V10z" fill="#bdbdbd"/><rect x="6" y="3" width="25" height="6" rx="2" fill="#d6d6d6"/></svg><svg style="position:absolute;left:14px;top:1027px;" width="37" height="36" viewBox="0 0 37 36"><circle cx="18" cy="18" r="12" stroke="#fff" stroke-width="4" fill="none"/><circle cx="6" cy="18" r="5" fill="#fff" stroke="#2d2420" stroke-width="2"/><circle cx="25" cy="6" r="5" fill="#fff" stroke="#2d2420" stroke-width="2"/><circle cx="25" cy="30" r="5" fill="#fff" stroke="#2d2420" stroke-width="2"/></svg></body></html>
